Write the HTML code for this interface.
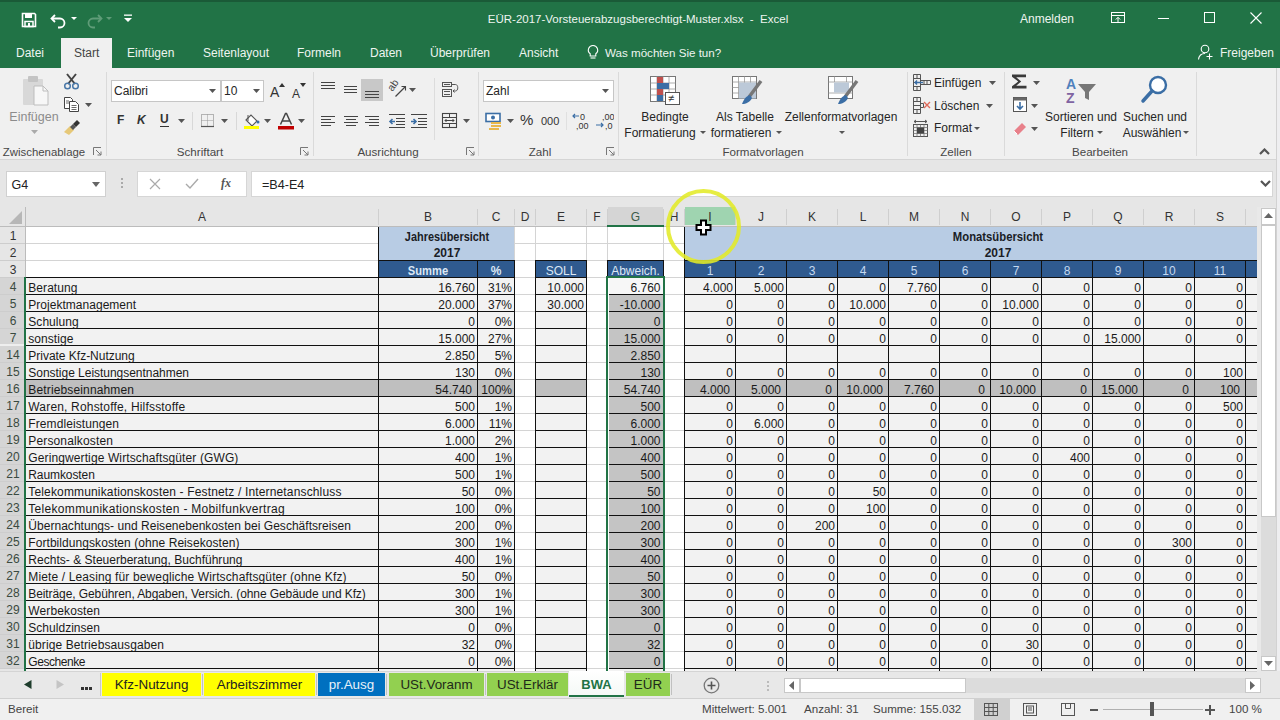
<!DOCTYPE html>
<html><head><meta charset="utf-8"><style>
html,body{margin:0;padding:0;width:1280px;height:720px;overflow:hidden;background:#f0f0f0;}
body{position:relative;font-family:"Liberation Sans", sans-serif;}
.a{position:absolute;}
.t{position:absolute;white-space:pre;line-height:16px;font-family:"Liberation Sans", sans-serif;}
</style></head><body>
<div class="a" style="left:0px;top:0px;width:1280px;height:68px;background:#217346;"></div>
<div class="a" style="left:0px;top:0px;width:1280px;height:2px;background:#1a5a37;"></div>
<div class="t" style="left:338px;width:600px;text-align:center;top:11px;font-size:11.5px;color:#eef5f0;font-weight:normal;">EÜR-2017-Vorsteuerabzugsberechtigt-Muster.xlsx  -  Excel</div>
<div class="t" style="left:1020px;top:11px;font-size:12px;color:#eef5f0;font-weight:normal;">Anmelden</div>
<svg class="a" style="left:20px;top:11px;" width="18" height="18" viewBox="0 0 18 18"><path d="M2.5 2.5h12l1 1v12h-13z" fill="none" stroke="#fff" stroke-width="1.6"/><rect x="5" y="2.5" width="7" height="4.5" fill="#fff"/><rect x="5" y="10.5" width="8" height="5" fill="none" stroke="#fff" stroke-width="1.5"/><rect x="8" y="12" width="2" height="3" fill="#fff"/></svg>
<svg class="a" style="left:49px;top:11px;" width="20" height="18" viewBox="0 0 20 18"><path d="M6 4 L2.5 7.5 L6 11" fill="none" stroke="#fff" stroke-width="1.8"/><path d="M3 7.5 H11 a4.5 4.5 0 0 1 0 9 H9" fill="none" stroke="#fff" stroke-width="1.8"/></svg>
<svg class="a" style="left:70px;top:16px;" width="8" height="5" viewBox="0 0 8 5"><path d="M1 1h6l-3 3z" fill="#fff"/></svg>
<svg class="a" style="left:84px;top:11px;" width="20" height="18" viewBox="0 0 20 18"><path d="M14 4 L17.5 7.5 L14 11" fill="none" stroke="#5f9c78" stroke-width="1.8"/><path d="M17 7.5 H9 a4.5 4.5 0 0 0 0 9 H11" fill="none" stroke="#5f9c78" stroke-width="1.8"/></svg>
<svg class="a" style="left:105px;top:16px;" width="8" height="5" viewBox="0 0 8 5"><path d="M1 1h6l-3 3z" fill="#5f9c78"/></svg>
<svg class="a" style="left:122px;top:13px;" width="12" height="10" viewBox="0 0 12 10"><rect x="2" y="1.5" width="8" height="1.3" fill="#fff"/><path d="M2 5h8l-4 4z" fill="#fff"/></svg>
<svg class="a" style="left:1109px;top:11px;" width="18" height="14" viewBox="0 0 18 14"><rect x="2.5" y="1.5" width="13" height="10" fill="none" stroke="#fff" stroke-width="1"/><line x1="2.5" y1="4.5" x2="15.5" y2="4.5" stroke="#fff"/><path d="M9 11V6.5M6.8 8.5L9 6.3l2.2 2.2" fill="none" stroke="#fff" stroke-width="1"/></svg>
<div class="a" style="left:1158px;top:18px;width:11px;height:1px;background:#fff;"></div>
<div class="a" style="left:1204px;top:12px;width:11px;height:11px;border:1px solid #fff;box-sizing:border-box;"></div>
<svg class="a" style="left:1249px;top:11px;" width="14" height="14" viewBox="0 0 14 14"><path d="M1.5 1.5L12.5 12.5M12.5 1.5L1.5 12.5" stroke="#fff" stroke-width="1.1"/></svg>
<div class="a" style="left:61px;top:38px;width:51px;height:30px;background:#f0f0f0;"></div>
<div class="t" style="left:16px;top:45px;font-size:12px;color:#eef5f0;font-weight:normal;">Datei</div>
<div class="t" style="left:74px;top:45px;font-size:12px;color:#444;font-weight:normal;">Start</div>
<div class="t" style="left:127px;top:45px;font-size:12px;color:#eef5f0;font-weight:normal;">Einfügen</div>
<div class="t" style="left:203px;top:45px;font-size:12px;color:#eef5f0;font-weight:normal;">Seitenlayout</div>
<div class="t" style="left:297px;top:45px;font-size:12px;color:#eef5f0;font-weight:normal;">Formeln</div>
<div class="t" style="left:370px;top:45px;font-size:12px;color:#eef5f0;font-weight:normal;">Daten</div>
<div class="t" style="left:430px;top:45px;font-size:12px;color:#eef5f0;font-weight:normal;">Überprüfen</div>
<div class="t" style="left:519px;top:45px;font-size:12px;color:#eef5f0;font-weight:normal;">Ansicht</div>
<div class="t" style="left:605px;top:45px;font-size:11.6px;color:#eef5f0;font-weight:normal;">Was möchten Sie tun?</div>
<svg class="a" style="left:586px;top:44px;" width="14" height="17" viewBox="0 0 14 17"><path d="M7 1.5a4.6 4.6 0 0 0-2.8 8.3V12h5.6V9.8A4.6 4.6 0 0 0 7 1.5z" fill="none" stroke="#fff" stroke-width="1.1"/><line x1="4.5" y1="14" x2="9.5" y2="14" stroke="#fff" stroke-width="1.1"/></svg>
<div class="t" style="left:1220px;top:45px;font-size:12px;color:#eef5f0;font-weight:normal;">Freigeben</div>
<svg class="a" style="left:1197px;top:44px;" width="18" height="16" viewBox="0 0 18 16"><circle cx="8" cy="5" r="3.8" fill="none" stroke="#fff" stroke-width="1.1"/><path d="M1.5 15.5c0.5-4 3-6 6.5-6" fill="none" stroke="#fff" stroke-width="1.1"/><path d="M12.5 9.5v6M9.5 12.5h6" stroke="#fff" stroke-width="1.1"/></svg>
<div class="a" style="left:0px;top:68px;width:1280px;height:91px;background:#f0f0f0;"></div>
<div class="a" style="left:0px;top:159px;width:1280px;height:1px;background:#d5d5d5;"></div>
<div class="a" style="left:106px;top:72px;width:1px;height:84px;background:#dadada;"></div>
<div class="a" style="left:313px;top:72px;width:1px;height:84px;background:#dadada;"></div>
<div class="a" style="left:478px;top:72px;width:1px;height:84px;background:#dadada;"></div>
<div class="a" style="left:618px;top:72px;width:1px;height:84px;background:#dadada;"></div>
<div class="a" style="left:907px;top:72px;width:1px;height:84px;background:#dadada;"></div>
<div class="a" style="left:1004px;top:72px;width:1px;height:84px;background:#dadada;"></div>
<div class="a" style="left:1196px;top:72px;width:1px;height:84px;background:#dadada;"></div>
<div class="t" style="left:-256px;width:600px;text-align:center;top:144px;font-size:11.4px;color:#474747;font-weight:normal;">Zwischenablage</div>
<div class="t" style="left:-100px;width:600px;text-align:center;top:144px;font-size:11.6px;color:#474747;font-weight:normal;">Schriftart</div>
<div class="t" style="left:88px;width:600px;text-align:center;top:144px;font-size:11.6px;color:#474747;font-weight:normal;">Ausrichtung</div>
<div class="t" style="left:240px;width:600px;text-align:center;top:144px;font-size:11.6px;color:#474747;font-weight:normal;">Zahl</div>
<div class="t" style="left:463px;width:600px;text-align:center;top:144px;font-size:11.6px;color:#474747;font-weight:normal;">Formatvorlagen</div>
<div class="t" style="left:656px;width:600px;text-align:center;top:144px;font-size:11.6px;color:#474747;font-weight:normal;">Zellen</div>
<div class="t" style="left:800px;width:600px;text-align:center;top:144px;font-size:11.6px;color:#474747;font-weight:normal;">Bearbeiten</div>
<svg class="a" style="left:93px;top:147px;" width="9" height="9" viewBox="0 0 9 9"><path d="M0.5 8V0.5H8" fill="none" stroke="#777" stroke-width="1"/><path d="M3 3L8 8M8 4.5V8H4.5" fill="none" stroke="#777" stroke-width="1"/></svg>
<svg class="a" style="left:300px;top:147px;" width="9" height="9" viewBox="0 0 9 9"><path d="M0.5 8V0.5H8" fill="none" stroke="#777" stroke-width="1"/><path d="M3 3L8 8M8 4.5V8H4.5" fill="none" stroke="#777" stroke-width="1"/></svg>
<svg class="a" style="left:466px;top:147px;" width="9" height="9" viewBox="0 0 9 9"><path d="M0.5 8V0.5H8" fill="none" stroke="#777" stroke-width="1"/><path d="M3 3L8 8M8 4.5V8H4.5" fill="none" stroke="#777" stroke-width="1"/></svg>
<svg class="a" style="left:606px;top:147px;" width="9" height="9" viewBox="0 0 9 9"><path d="M0.5 8V0.5H8" fill="none" stroke="#777" stroke-width="1"/><path d="M3 3L8 8M8 4.5V8H4.5" fill="none" stroke="#777" stroke-width="1"/></svg>
<svg class="a" style="left:1259px;top:148px;" width="11" height="7" viewBox="0 0 11 7"><path d="M1 6L5.5 1.5L10 6" fill="none" stroke="#555" stroke-width="2.2"/></svg>
<svg class="a" style="left:20px;top:74px;" width="34" height="34" viewBox="0 0 34 34"><rect x="3" y="5" width="20" height="26" rx="1" fill="#d8d8d8"/><rect x="8" y="2" width="10" height="6" rx="1" fill="#c4c4c4"/><path d="M14 12h9l5 5v14H14z" fill="#f7f7f7" stroke="#bdbdbd" stroke-width="1"/><path d="M23 12v5h5" fill="none" stroke="#bdbdbd"/></svg>
<div class="t" style="left:-266px;width:600px;text-align:center;top:109px;font-size:12.5px;color:#8c8c8c;font-weight:normal;">Einfügen</div>
<svg class="a" style="left:31px;top:130px;" width="7" height="4" viewBox="0 0 7 4"><path d="M0 0h7l-3.5 4z" fill="#aaa"/></svg>
<svg class="a" style="left:63px;top:73px;" width="17" height="17" viewBox="0 0 17 17"><path d="M4 1l8 10M13 1l-8 10" stroke="#444" stroke-width="2"/><circle cx="4.5" cy="13" r="2.8" fill="none" stroke="#4a78a8" stroke-width="1.5"/><circle cx="12.5" cy="13" r="2.8" fill="none" stroke="#4a78a8" stroke-width="1.5"/></svg>
<svg class="a" style="left:63px;top:96px;" width="18" height="17" viewBox="0 0 18 17"><path d="M1.5 1.5h6l2 2v9h-8z" fill="#fff" stroke="#444" stroke-width="1"/><path d="M6.5 5.5h6l3 3v7h-9z" fill="#fff" stroke="#444" stroke-width="1"/><path d="M8.5 9.5h5M8.5 11.5h5M8.5 13.5h5M3 5h3M3 7h3" stroke="#444" stroke-width="0.8"/></svg>
<svg class="a" style="left:85px;top:103px;" width="7" height="4" viewBox="0 0 7 4"><path d="M0 0h7l-3.5 4z" fill="#555"/></svg>
<svg class="a" style="left:63px;top:119px;" width="18" height="17" viewBox="0 0 18 17"><path d="M1 13l6-6 4 4-5 5z" fill="#e6c878"/><path d="M7 8l3-3 3 3-3 3z" fill="#555"/><path d="M10 5l4-4 3 3-4 4z" fill="#333"/></svg>
<div class="a" style="left:111px;top:80px;width:110px;height:22px;background:#fff;border:1px solid #c6c6c6;box-sizing:border-box;"></div>
<div class="t" style="left:114px;top:83px;font-size:12px;color:#262626;font-weight:normal;">Calibri</div>
<svg class="a" style="left:209px;top:89px;" width="7" height="4" viewBox="0 0 7 4"><path d="M0 0h7l-3.5 4z" fill="#555"/></svg>
<div class="a" style="left:221px;top:80px;width:43px;height:22px;background:#fff;border:1px solid #c6c6c6;box-sizing:border-box;"></div>
<div class="t" style="left:224px;top:83px;font-size:12px;color:#262626;font-weight:normal;">10</div>
<svg class="a" style="left:253px;top:89px;" width="7" height="4" viewBox="0 0 7 4"><path d="M0 0h7l-3.5 4z" fill="#555"/></svg>
<div class="t" style="left:270px;top:83px;font-size:14px;color:#333;font-weight:normal;line-height:18px;">A</div>
<svg class="a" style="left:279px;top:83px;" width="6" height="4" viewBox="0 0 6 4"><path d="M0 4L3 0L6 4z" fill="#333"/></svg>
<div class="t" style="left:292px;top:85px;font-size:12px;color:#333;font-weight:normal;line-height:18px;">A</div>
<svg class="a" style="left:300px;top:83px;" width="6" height="4" viewBox="0 0 6 4"><path d="M0 0L3 4L6 0z" fill="#333"/></svg>
<div class="t" style="left:117px;top:112px;font-size:12px;color:#333;font-weight:bold;">F</div>
<div class="t" style="left:137px;top:112px;font-size:12px;color:#333;font-weight:bold;font-style:italic;">K</div>
<div class="t" style="left:160px;top:111px;font-size:12px;color:#333;font-weight:bold;">U</div>
<div class="a" style="left:160px;top:126px;width:9px;height:1px;background:#333;"></div>
<svg class="a" style="left:178px;top:119px;" width="7" height="4" viewBox="0 0 7 4"><path d="M0 0h7l-3.5 4z" fill="#555"/></svg>
<div class="a" style="left:192px;top:112px;width:1px;height:18px;background:#d8d8d8;"></div>
<svg class="a" style="left:200px;top:113px;" width="15" height="15" viewBox="0 0 15 15"><rect x="1.5" y="1.5" width="12" height="12" fill="none" stroke="#777" stroke-width="1" stroke-dasharray="1 1"/><line x1="7.5" y1="1.5" x2="7.5" y2="13.5" stroke="#999" stroke-dasharray="1 1"/><line x1="1.5" y1="7.5" x2="13.5" y2="7.5" stroke="#999" stroke-dasharray="1 1"/><line x1="1" y1="13.5" x2="14" y2="13.5" stroke="#555" stroke-width="1.2"/></svg>
<svg class="a" style="left:221px;top:119px;" width="7" height="4" viewBox="0 0 7 4"><path d="M0 0h7l-3.5 4z" fill="#555"/></svg>
<div class="a" style="left:236px;top:112px;width:1px;height:18px;background:#d8d8d8;"></div>
<svg class="a" style="left:243px;top:112px;" width="18" height="18" viewBox="0 0 18 18"><path d="M3 8l5-5 6 6-5 5z" fill="#fff" stroke="#555" stroke-width="1.1"/><path d="M5 3v6" stroke="#555"/><circle cx="15" cy="10" r="1.5" fill="#3b6ea5"/><rect x="1" y="14" width="15" height="3" fill="#ffff00"/></svg>
<svg class="a" style="left:264px;top:119px;" width="7" height="4" viewBox="0 0 7 4"><path d="M0 0h7l-3.5 4z" fill="#555"/></svg>
<svg class="a" style="left:277px;top:112px;" width="18" height="18" viewBox="0 0 18 18"><path d="M3.5 12.5L8.5 1.5h1L14.5 12.5M5.5 9h7" fill="none" stroke="#444" stroke-width="1.5"/><rect x="1" y="14" width="16" height="3.5" fill="#c00000"/></svg>
<svg class="a" style="left:298px;top:119px;" width="7" height="4" viewBox="0 0 7 4"><path d="M0 0h7l-3.5 4z" fill="#555"/></svg>
<div class="a" style="left:321px;top:82px;width:14px;height:1px;background:#444;"></div>
<div class="a" style="left:321px;top:85px;width:14px;height:1px;background:#444;"></div>
<div class="a" style="left:321px;top:88px;width:14px;height:1px;background:#444;"></div>
<div class="a" style="left:344px;top:86px;width:13px;height:1px;background:#444;"></div>
<div class="a" style="left:344px;top:89px;width:13px;height:1px;background:#444;"></div>
<div class="a" style="left:344px;top:92px;width:13px;height:1px;background:#444;"></div>
<div class="a" style="left:361px;top:79px;width:22px;height:22px;background:#c8c8c8;"></div>
<div class="a" style="left:365px;top:91px;width:14px;height:1px;background:#444;"></div>
<div class="a" style="left:365px;top:94px;width:14px;height:1px;background:#444;"></div>
<div class="a" style="left:365px;top:97px;width:14px;height:1px;background:#444;"></div>
<svg class="a" style="left:386px;top:77px;" width="22" height="22" viewBox="0 0 22 22"><text x="0" y="0" font-family="Liberation Sans" font-size="10.5" fill="#444" transform="translate(6.5 15) rotate(-55)">ab</text><path d="M9.5 19.5L19 10" stroke="#444" stroke-width="1.2"/><path d="M15.5 9.5h4v4" fill="none" stroke="#444" stroke-width="1.1"/></svg>
<svg class="a" style="left:409px;top:88px;" width="7" height="4" viewBox="0 0 7 4"><path d="M0 0h7l-3.5 4z" fill="#555"/></svg>
<div class="a" style="left:434px;top:78px;width:1px;height:62px;background:#dcdcdc;"></div>
<svg class="a" style="left:441px;top:81px;" width="20" height="18" viewBox="0 0 20 18"><rect x="1.5" y="1.5" width="9" height="4" fill="none" stroke="#555" stroke-width="1"/><path d="M3 3.5h6M10.5 3.5h4" stroke="#555" stroke-width="1"/><rect x="1.5" y="8.5" width="9" height="7" fill="none" stroke="#555" stroke-width="1"/><path d="M3 10.5h6M3 13.5h6" stroke="#555" stroke-width="1"/><path d="M14.5 3.5c3 0 3 6.5 0 6.5H12M13.5 8.5L12 10l1.5 1.5" fill="none" stroke="#555" stroke-width="1"/></svg>
<div class="a" style="left:321px;top:116px;width:14px;height:1px;background:#444;"></div>
<div class="a" style="left:321px;top:119px;width:10px;height:1px;background:#444;"></div>
<div class="a" style="left:321px;top:122px;width:14px;height:1px;background:#444;"></div>
<div class="a" style="left:321px;top:125px;width:10px;height:1px;background:#444;"></div>
<div class="a" style="left:344px;top:116px;width:14px;height:1px;background:#444;"></div>
<div class="a" style="left:346px;top:119px;width:10px;height:1px;background:#444;"></div>
<div class="a" style="left:344px;top:122px;width:14px;height:1px;background:#444;"></div>
<div class="a" style="left:346px;top:125px;width:10px;height:1px;background:#444;"></div>
<div class="a" style="left:365px;top:116px;width:14px;height:1px;background:#444;"></div>
<div class="a" style="left:369px;top:119px;width:10px;height:1px;background:#444;"></div>
<div class="a" style="left:365px;top:122px;width:14px;height:1px;background:#444;"></div>
<div class="a" style="left:369px;top:125px;width:10px;height:1px;background:#444;"></div>
<svg class="a" style="left:388px;top:113px;" width="18" height="16" viewBox="0 0 18 16"><path d="M1 1.5h16M8 5.5h9M8 8.5h9M8 11.5h9M1 14.5h16" stroke="#444" stroke-width="1"/><path d="M2 8.5h5M4.5 6L2 8.5 4.5 11" fill="none" stroke="#3b6ea5" stroke-width="1.6"/></svg>
<svg class="a" style="left:410px;top:113px;" width="18" height="16" viewBox="0 0 18 16"><path d="M1 1.5h16M8 5.5h9M8 8.5h9M8 11.5h9M1 14.5h16" stroke="#444" stroke-width="1"/><path d="M1 8.5h5M3.5 6L6 8.5 3.5 11" fill="none" stroke="#3b6ea5" stroke-width="1.6"/></svg>
<svg class="a" style="left:441px;top:112px;" width="17" height="17" viewBox="0 0 17 17"><rect x="1.5" y="1.5" width="14" height="14" fill="none" stroke="#444" stroke-width="1.1"/><path d="M1.5 5.5h14M1.5 11.5h14M8.5 1.5v4M8.5 11.5v4" stroke="#444" stroke-width="1"/><path d="M4 8.5h9M5.5 7l-1.5 1.5 1.5 1.5M11.5 7l1.5 1.5-1.5 1.5" fill="none" stroke="#444" stroke-width="1"/></svg>
<svg class="a" style="left:463px;top:119px;" width="7" height="4" viewBox="0 0 7 4"><path d="M0 0h7l-3.5 4z" fill="#555"/></svg>
<div class="a" style="left:483px;top:80px;width:131px;height:22px;background:#fff;border:1px solid #c6c6c6;box-sizing:border-box;"></div>
<div class="t" style="left:486px;top:83px;font-size:12px;color:#262626;font-weight:normal;">Zahl</div>
<svg class="a" style="left:602px;top:89px;" width="7" height="4" viewBox="0 0 7 4"><path d="M0 0h7l-3.5 4z" fill="#555"/></svg>
<svg class="a" style="left:485px;top:112px;" width="20" height="18" viewBox="0 0 20 18"><rect x="1" y="1.5" width="14" height="8" fill="#fff" stroke="#3b6ea5" stroke-width="1.6"/><circle cx="8" cy="5.5" r="2" fill="#3b6ea5"/><rect x="6" y="10" width="10" height="2" fill="#e8b84a"/><rect x="6" y="13" width="10" height="2" fill="#e8b84a"/><rect x="4" y="16" width="10" height="2" fill="#e8b84a"/></svg>
<svg class="a" style="left:507px;top:119px;" width="7" height="4" viewBox="0 0 7 4"><path d="M0 0h7l-3.5 4z" fill="#555"/></svg>
<div class="t" style="left:520px;top:111px;font-size:15px;color:#333;font-weight:normal;line-height:18px;">%</div>
<div class="t" style="left:541px;top:113px;font-size:11px;color:#333;font-weight:normal;">000</div>
<div class="a" style="left:566px;top:112px;width:1px;height:18px;background:#e0e0e0;"></div>
<svg class="a" style="left:571px;top:111px;" width="20" height="20" viewBox="0 0 20 20"><text x="9" y="9" font-family="Liberation Sans" font-size="9" fill="#333">0</text><text x="5" y="18" font-family="Liberation Sans" font-size="9" fill="#333">,00</text><path d="M2 5h6M4 3L2 5l2 2" fill="none" stroke="#3b6ea5" stroke-width="1.2"/></svg>
<svg class="a" style="left:594px;top:111px;" width="20" height="20" viewBox="0 0 20 20"><text x="8" y="9" font-family="Liberation Sans" font-size="9" fill="#333">,00</text><text x="11" y="18" font-family="Liberation Sans" font-size="9" fill="#333">,0</text><path d="M2 14h7M7 12l2 2-2 2" fill="none" stroke="#3b6ea5" stroke-width="1.2"/></svg>
<svg class="a" style="left:649px;top:75px;" width="34" height="32" viewBox="0 0 34 32"><rect x="1.5" y="1.5" width="25" height="25" fill="#fff" stroke="#777" stroke-width="1"/><path d="M1.5 8h25M1.5 14h25M1.5 20h25M8 1.5v25M14 1.5v25M20 1.5v25" stroke="#999" stroke-width="0.8"/><rect x="8" y="2" width="6" height="6" fill="#c0504d"/><rect x="8" y="8" width="12" height="6" fill="#3b6ea5"/><rect x="8" y="14" width="6" height="6" fill="#c0504d"/><rect x="8" y="20" width="6" height="6" fill="#3b6ea5"/><rect x="16.5" y="17.5" width="14" height="12" fill="#fff" stroke="#555" stroke-width="1"/><text x="19" y="27" font-family="Liberation Sans" font-size="11" fill="#333">≠</text></svg>
<div class="t" style="left:365px;width:600px;text-align:center;top:109px;font-size:12px;color:#262626;font-weight:normal;">Bedingte</div>
<div class="t" style="left:360px;width:600px;text-align:center;top:125px;font-size:12px;color:#262626;font-weight:normal;">Formatierung</div>
<svg class="a" style="left:700px;top:131px;" width="6" height="3" viewBox="0 0 6 3"><path d="M0 0h6l-3 3z" fill="#555"/></svg>
<svg class="a" style="left:731px;top:75px;" width="34" height="32" viewBox="0 0 34 32"><rect x="1.5" y="1.5" width="24" height="22" fill="#fff" stroke="#777" stroke-width="1"/><path d="M1.5 7h24M1.5 12.5h24M1.5 18h24M7.5 1.5v22M13.5 1.5v22M19.5 1.5v22" stroke="#999" stroke-width="0.8"/><rect x="8" y="7.5" width="17" height="16" fill="#bcc9d8"/><path d="M30 6L18 22" stroke="#777" stroke-width="3.5"/><path d="M19 20c-4 1-6 4-8 9 4 0 8-2 10-6z" fill="#3b6ea5"/></svg>
<div class="t" style="left:445px;width:600px;text-align:center;top:109px;font-size:12px;color:#262626;font-weight:normal;">Als Tabelle</div>
<div class="t" style="left:441px;width:600px;text-align:center;top:125px;font-size:12px;color:#262626;font-weight:normal;">formatieren</div>
<svg class="a" style="left:776px;top:131px;" width="6" height="3" viewBox="0 0 6 3"><path d="M0 0h6l-3 3z" fill="#555"/></svg>
<svg class="a" style="left:827px;top:75px;" width="34" height="32" viewBox="0 0 34 32"><rect x="1.5" y="1.5" width="24" height="22" fill="#fff" stroke="#777" stroke-width="1"/><path d="M1.5 7h24M1.5 18h24M7.5 1.5v5.5M19.5 1.5v5.5" stroke="#999" stroke-width="0.8"/><rect x="7" y="7.5" width="15" height="10" fill="#bcc9d8"/><path d="M30 6L18 22" stroke="#777" stroke-width="3.5"/><path d="M19 20c-4 1-6 4-8 9 4 0 8-2 10-6z" fill="#3b6ea5"/></svg>
<div class="t" style="left:541px;width:600px;text-align:center;top:109px;font-size:12px;color:#262626;font-weight:normal;">Zellenformatvorlagen</div>
<svg class="a" style="left:839px;top:131px;" width="6" height="3" viewBox="0 0 6 3"><path d="M0 0h6l-3 3z" fill="#555"/></svg>
<svg class="a" style="left:912px;top:73px;" width="20" height="18" viewBox="0 0 20 18"><path d="M1.5 1.5h7v16h-7zM1.5 5.5h7M1.5 9.5h7M1.5 13.5h7M5 1.5v4M5 13.5v4" fill="none" stroke="#555" stroke-width="1"/><path d="M8.5 7.5h10v4h-10zM12 7.5v4M15 7.5v4" fill="none" stroke="#555" stroke-width="1"/><path d="M11 9.5H3M5 7.5L3 9.5l2 2" fill="none" stroke="#3b6ea5" stroke-width="1.4"/></svg>
<div class="t" style="left:934px;top:75px;font-size:12px;color:#262626;font-weight:normal;">Einfügen</div>
<svg class="a" style="left:989px;top:81px;" width="7" height="4" viewBox="0 0 7 4"><path d="M0 0h7l-3.5 4z" fill="#555"/></svg>
<svg class="a" style="left:912px;top:96px;" width="20" height="18" viewBox="0 0 20 18"><path d="M1.5 1.5h7v16h-7zM1.5 5.5h7M1.5 9.5h7M1.5 13.5h7M5 1.5v4M5 13.5v4M8.5 7.5h3v4h-3" fill="none" stroke="#555" stroke-width="1"/><path d="M12 6l6 6M18 6l-6 6" stroke="#e06a5a" stroke-width="1.4"/></svg>
<div class="t" style="left:934px;top:98px;font-size:12px;color:#262626;font-weight:normal;">Löschen</div>
<svg class="a" style="left:986px;top:104px;" width="7" height="4" viewBox="0 0 7 4"><path d="M0 0h7l-3.5 4z" fill="#555"/></svg>
<svg class="a" style="left:912px;top:119px;" width="18" height="19" viewBox="0 0 18 19"><path d="M2 2.5h13M4 1l-2 1.5 2 1.5M13 1l2 1.5-2 1.5" fill="none" stroke="#555" stroke-width="1"/><rect x="1.5" y="5.5" width="14" height="12" fill="none" stroke="#555" stroke-width="1"/><path d="M1.5 8.5h14M1.5 11.5h14M1.5 14.5h14M5 5.5v12M8.5 5.5v12M12 5.5v12" stroke="#777" stroke-width="0.8"/><rect x="5" y="8.5" width="7" height="6" fill="#444"/></svg>
<div class="t" style="left:934px;top:120px;font-size:12px;color:#262626;font-weight:normal;">Format</div>
<svg class="a" style="left:974px;top:127px;" width="6" height="3" viewBox="0 0 6 3"><path d="M0 0h6l-3 3z" fill="#555"/></svg>
<svg class="a" style="left:1011px;top:73px;" width="17" height="17" viewBox="0 0 17 17"><path d="M1 1.5h14v2.8H5.2l5 4.2-5 4.2H15.5v2.8H1v-2.2l6.2-4.8L1 3.7z" fill="#3a3a3a"/></svg>
<svg class="a" style="left:1033px;top:81px;" width="7" height="4" viewBox="0 0 7 4"><path d="M0 0h7l-3.5 4z" fill="#555"/></svg>
<svg class="a" style="left:1012px;top:96px;" width="16" height="17" viewBox="0 0 16 17"><rect x="1.5" y="1.5" width="13" height="14" fill="#fff" stroke="#555" stroke-width="1"/><rect x="1.5" y="1.5" width="13" height="3" fill="#666"/><path d="M8 6v7M5 10l3 3 3-3" fill="none" stroke="#3b6ea5" stroke-width="1.6"/></svg>
<svg class="a" style="left:1031px;top:104px;" width="7" height="4" viewBox="0 0 7 4"><path d="M0 0h7l-3.5 4z" fill="#555"/></svg>
<svg class="a" style="left:1012px;top:120px;" width="16" height="16" viewBox="0 0 16 16"><path d="M2 11l8-8 4 4-8 8z" fill="#e8808a"/><path d="M2 11l3 3" stroke="#fff" stroke-width="1"/></svg>
<svg class="a" style="left:1031px;top:127px;" width="7" height="4" viewBox="0 0 7 4"><path d="M0 0h7l-3.5 4z" fill="#555"/></svg>
<svg class="a" style="left:1064px;top:75px;" width="34" height="30" viewBox="0 0 34 30"><text x="2" y="14" font-family="Liberation Sans" font-size="14" font-weight="bold" fill="#4f81bd">A</text><text x="2" y="28" font-family="Liberation Sans" font-size="14" font-weight="bold" fill="#8064a2">Z</text><path d="M14 9h18l-7 8v8l-4-2v-6z" fill="#777"/></svg>
<div class="t" style="left:781px;width:600px;text-align:center;top:109px;font-size:12px;color:#262626;font-weight:normal;">Sortieren und</div>
<div class="t" style="left:777px;width:600px;text-align:center;top:125px;font-size:12px;color:#262626;font-weight:normal;">Filtern</div>
<svg class="a" style="left:1097px;top:131px;" width="6" height="3" viewBox="0 0 6 3"><path d="M0 0h6l-3 3z" fill="#555"/></svg>
<svg class="a" style="left:1138px;top:74px;" width="32" height="32" viewBox="0 0 32 32"><circle cx="20" cy="11" r="8" fill="#fff" stroke="#3b6ea5" stroke-width="2.4"/><path d="M14 17L5 27" stroke="#3b6ea5" stroke-width="3.5" stroke-linecap="round"/></svg>
<div class="t" style="left:855px;width:600px;text-align:center;top:109px;font-size:12px;color:#262626;font-weight:normal;">Suchen und</div>
<div class="t" style="left:852px;width:600px;text-align:center;top:125px;font-size:12px;color:#262626;font-weight:normal;">Auswählen</div>
<svg class="a" style="left:1183px;top:131px;" width="6" height="3" viewBox="0 0 6 3"><path d="M0 0h6l-3 3z" fill="#555"/></svg>
<div class="a" style="left:0px;top:160px;width:1280px;height:47px;background:#e6e6e6;"></div>
<div class="a" style="left:6px;top:171px;width:100px;height:26px;background:#fff;border:1px solid #d0d0d0;box-sizing:border-box;"></div>
<div class="t" style="left:11.5px;top:177px;font-size:12.5px;color:#222;font-weight:normal;">G4</div>
<svg class="a" style="left:92px;top:182px;" width="8" height="5" viewBox="0 0 8 5"><path d="M0 0h8l-4 5z" fill="#666"/></svg>
<div class="a" style="left:121px;top:178px;width:2px;height:2px;background:#aaa;"></div>
<div class="a" style="left:121px;top:182px;width:2px;height:2px;background:#aaa;"></div>
<div class="a" style="left:121px;top:186px;width:2px;height:2px;background:#aaa;"></div>
<div class="a" style="left:137px;top:171px;width:110px;height:26px;background:#fff;border:1px solid #d6d6d6;box-sizing:border-box;"></div>
<svg class="a" style="left:149px;top:178px;" width="12" height="12" viewBox="0 0 12 12"><path d="M1 1L11 11M11 1L1 11" stroke="#aaa" stroke-width="1.2"/></svg>
<svg class="a" style="left:185px;top:178px;" width="14" height="12" viewBox="0 0 14 12"><path d="M1 6L5 10L13 1" fill="none" stroke="#aaa" stroke-width="1.4"/></svg>
<div class="t" style="left:221px;top:175px;font-size:12px;color:#555;font-weight:bold;font-family:'Liberation Serif',serif;font-style:italic;">fx</div>
<div class="a" style="left:251px;top:171px;width:1022px;height:26px;background:#fff;border:1px solid #d6d6d6;box-sizing:border-box;"></div>
<div class="t" style="left:262px;top:177px;font-size:12.6px;color:#222;font-weight:normal;">=B4-E4</div>
<svg class="a" style="left:1260px;top:180px;" width="11" height="7" viewBox="0 0 11 7"><path d="M1 1L5.5 5.5L10 1" fill="none" stroke="#555" stroke-width="2.2"/></svg>
<div class="a" style="left:26px;top:227px;width:1231px;height:444px;background:#fff;"></div>
<div class="a" style="left:378px;top:226px;width:1px;height:445px;background:#d4d4d4;"></div>
<div class="a" style="left:477px;top:226px;width:1px;height:445px;background:#d4d4d4;"></div>
<div class="a" style="left:514px;top:226px;width:1px;height:445px;background:#d4d4d4;"></div>
<div class="a" style="left:535px;top:226px;width:1px;height:445px;background:#d4d4d4;"></div>
<div class="a" style="left:586px;top:226px;width:1px;height:445px;background:#d4d4d4;"></div>
<div class="a" style="left:607px;top:226px;width:1px;height:445px;background:#d4d4d4;"></div>
<div class="a" style="left:663px;top:226px;width:1px;height:445px;background:#d4d4d4;"></div>
<div class="a" style="left:684px;top:226px;width:1px;height:445px;background:#d4d4d4;"></div>
<div class="a" style="left:735px;top:226px;width:1px;height:445px;background:#d4d4d4;"></div>
<div class="a" style="left:786px;top:226px;width:1px;height:445px;background:#d4d4d4;"></div>
<div class="a" style="left:837px;top:226px;width:1px;height:445px;background:#d4d4d4;"></div>
<div class="a" style="left:888px;top:226px;width:1px;height:445px;background:#d4d4d4;"></div>
<div class="a" style="left:939px;top:226px;width:1px;height:445px;background:#d4d4d4;"></div>
<div class="a" style="left:990px;top:226px;width:1px;height:445px;background:#d4d4d4;"></div>
<div class="a" style="left:1041px;top:226px;width:1px;height:445px;background:#d4d4d4;"></div>
<div class="a" style="left:1092px;top:226px;width:1px;height:445px;background:#d4d4d4;"></div>
<div class="a" style="left:1143px;top:226px;width:1px;height:445px;background:#d4d4d4;"></div>
<div class="a" style="left:1194px;top:226px;width:1px;height:445px;background:#d4d4d4;"></div>
<div class="a" style="left:1245px;top:226px;width:1px;height:445px;background:#d4d4d4;"></div>
<div class="a" style="left:26px;top:243px;width:1231px;height:1px;background:#d4d4d4;"></div>
<div class="a" style="left:26px;top:260px;width:1231px;height:1px;background:#d4d4d4;"></div>
<div class="a" style="left:26px;top:277px;width:1231px;height:1px;background:#d4d4d4;"></div>
<div class="a" style="left:26px;top:294px;width:1231px;height:1px;background:#d4d4d4;"></div>
<div class="a" style="left:26px;top:311px;width:1231px;height:1px;background:#d4d4d4;"></div>
<div class="a" style="left:26px;top:328px;width:1231px;height:1px;background:#d4d4d4;"></div>
<div class="a" style="left:26px;top:345px;width:1231px;height:1px;background:#d4d4d4;"></div>
<div class="a" style="left:26px;top:362px;width:1231px;height:1px;background:#d4d4d4;"></div>
<div class="a" style="left:26px;top:379px;width:1231px;height:1px;background:#d4d4d4;"></div>
<div class="a" style="left:26px;top:396px;width:1231px;height:1px;background:#d4d4d4;"></div>
<div class="a" style="left:26px;top:413px;width:1231px;height:1px;background:#d4d4d4;"></div>
<div class="a" style="left:26px;top:430px;width:1231px;height:1px;background:#d4d4d4;"></div>
<div class="a" style="left:26px;top:447px;width:1231px;height:1px;background:#d4d4d4;"></div>
<div class="a" style="left:26px;top:464px;width:1231px;height:1px;background:#d4d4d4;"></div>
<div class="a" style="left:26px;top:481px;width:1231px;height:1px;background:#d4d4d4;"></div>
<div class="a" style="left:26px;top:498px;width:1231px;height:1px;background:#d4d4d4;"></div>
<div class="a" style="left:26px;top:515px;width:1231px;height:1px;background:#d4d4d4;"></div>
<div class="a" style="left:26px;top:532px;width:1231px;height:1px;background:#d4d4d4;"></div>
<div class="a" style="left:26px;top:549px;width:1231px;height:1px;background:#d4d4d4;"></div>
<div class="a" style="left:26px;top:566px;width:1231px;height:1px;background:#d4d4d4;"></div>
<div class="a" style="left:26px;top:583px;width:1231px;height:1px;background:#d4d4d4;"></div>
<div class="a" style="left:26px;top:600px;width:1231px;height:1px;background:#d4d4d4;"></div>
<div class="a" style="left:26px;top:617px;width:1231px;height:1px;background:#d4d4d4;"></div>
<div class="a" style="left:26px;top:634px;width:1231px;height:1px;background:#d4d4d4;"></div>
<div class="a" style="left:26px;top:651px;width:1231px;height:1px;background:#d4d4d4;"></div>
<div class="a" style="left:26px;top:668px;width:1231px;height:1px;background:#d4d4d4;"></div>
<div class="a" style="left:379px;top:227px;width:135px;height:33px;background:#b8cce4;"></div>
<div class="a" style="left:685px;top:227px;width:572px;height:33px;background:#b8cce4;"></div>
<div class="a" style="left:379px;top:261px;width:98px;height:16px;background:#2f5a8f;"></div>
<div class="a" style="left:478px;top:261px;width:36px;height:16px;background:#2f5a8f;"></div>
<div class="a" style="left:536px;top:261px;width:50px;height:16px;background:#2f5a8f;"></div>
<div class="a" style="left:608px;top:261px;width:55px;height:16px;background:#2f5a8f;"></div>
<div class="a" style="left:685px;top:261px;width:50px;height:16px;background:#2f5a8f;"></div>
<div class="a" style="left:736px;top:261px;width:50px;height:16px;background:#2f5a8f;"></div>
<div class="a" style="left:787px;top:261px;width:50px;height:16px;background:#2f5a8f;"></div>
<div class="a" style="left:838px;top:261px;width:50px;height:16px;background:#2f5a8f;"></div>
<div class="a" style="left:889px;top:261px;width:50px;height:16px;background:#2f5a8f;"></div>
<div class="a" style="left:940px;top:261px;width:50px;height:16px;background:#2f5a8f;"></div>
<div class="a" style="left:991px;top:261px;width:50px;height:16px;background:#2f5a8f;"></div>
<div class="a" style="left:1042px;top:261px;width:50px;height:16px;background:#2f5a8f;"></div>
<div class="a" style="left:1093px;top:261px;width:50px;height:16px;background:#2f5a8f;"></div>
<div class="a" style="left:1144px;top:261px;width:50px;height:16px;background:#2f5a8f;"></div>
<div class="a" style="left:1195px;top:261px;width:50px;height:16px;background:#2f5a8f;"></div>
<div class="a" style="left:1246px;top:261px;width:11px;height:16px;background:#2f5a8f;"></div>
<div class="a" style="left:26px;top:278px;width:352px;height:16px;background:#f2f2f2;"></div>
<div class="a" style="left:379px;top:278px;width:98px;height:16px;background:#f2f2f2;"></div>
<div class="a" style="left:478px;top:278px;width:36px;height:16px;background:#f2f2f2;"></div>
<div class="a" style="left:536px;top:278px;width:50px;height:16px;background:#f2f2f2;"></div>
<div class="a" style="left:608px;top:278px;width:55px;height:16px;background:#f7f7f7;"></div>
<div class="a" style="left:685px;top:278px;width:50px;height:16px;background:#f2f2f2;"></div>
<div class="a" style="left:736px;top:278px;width:50px;height:16px;background:#f2f2f2;"></div>
<div class="a" style="left:787px;top:278px;width:50px;height:16px;background:#f2f2f2;"></div>
<div class="a" style="left:838px;top:278px;width:50px;height:16px;background:#f2f2f2;"></div>
<div class="a" style="left:889px;top:278px;width:50px;height:16px;background:#f2f2f2;"></div>
<div class="a" style="left:940px;top:278px;width:50px;height:16px;background:#f2f2f2;"></div>
<div class="a" style="left:991px;top:278px;width:50px;height:16px;background:#f2f2f2;"></div>
<div class="a" style="left:1042px;top:278px;width:50px;height:16px;background:#f2f2f2;"></div>
<div class="a" style="left:1093px;top:278px;width:50px;height:16px;background:#f2f2f2;"></div>
<div class="a" style="left:1144px;top:278px;width:50px;height:16px;background:#f2f2f2;"></div>
<div class="a" style="left:1195px;top:278px;width:50px;height:16px;background:#f2f2f2;"></div>
<div class="a" style="left:1246px;top:278px;width:11px;height:16px;background:#f2f2f2;"></div>
<div class="a" style="left:26px;top:295px;width:352px;height:16px;background:#f2f2f2;"></div>
<div class="a" style="left:379px;top:295px;width:98px;height:16px;background:#f2f2f2;"></div>
<div class="a" style="left:478px;top:295px;width:36px;height:16px;background:#f2f2f2;"></div>
<div class="a" style="left:536px;top:295px;width:50px;height:16px;background:#f2f2f2;"></div>
<div class="a" style="left:608px;top:295px;width:55px;height:16px;background:#c4c4c4;"></div>
<div class="a" style="left:685px;top:295px;width:50px;height:16px;background:#f2f2f2;"></div>
<div class="a" style="left:736px;top:295px;width:50px;height:16px;background:#f2f2f2;"></div>
<div class="a" style="left:787px;top:295px;width:50px;height:16px;background:#f2f2f2;"></div>
<div class="a" style="left:838px;top:295px;width:50px;height:16px;background:#f2f2f2;"></div>
<div class="a" style="left:889px;top:295px;width:50px;height:16px;background:#f2f2f2;"></div>
<div class="a" style="left:940px;top:295px;width:50px;height:16px;background:#f2f2f2;"></div>
<div class="a" style="left:991px;top:295px;width:50px;height:16px;background:#f2f2f2;"></div>
<div class="a" style="left:1042px;top:295px;width:50px;height:16px;background:#f2f2f2;"></div>
<div class="a" style="left:1093px;top:295px;width:50px;height:16px;background:#f2f2f2;"></div>
<div class="a" style="left:1144px;top:295px;width:50px;height:16px;background:#f2f2f2;"></div>
<div class="a" style="left:1195px;top:295px;width:50px;height:16px;background:#f2f2f2;"></div>
<div class="a" style="left:1246px;top:295px;width:11px;height:16px;background:#f2f2f2;"></div>
<div class="a" style="left:26px;top:312px;width:352px;height:16px;background:#f2f2f2;"></div>
<div class="a" style="left:379px;top:312px;width:98px;height:16px;background:#f2f2f2;"></div>
<div class="a" style="left:478px;top:312px;width:36px;height:16px;background:#f2f2f2;"></div>
<div class="a" style="left:536px;top:312px;width:50px;height:16px;background:#f2f2f2;"></div>
<div class="a" style="left:608px;top:312px;width:55px;height:16px;background:#c4c4c4;"></div>
<div class="a" style="left:685px;top:312px;width:50px;height:16px;background:#f2f2f2;"></div>
<div class="a" style="left:736px;top:312px;width:50px;height:16px;background:#f2f2f2;"></div>
<div class="a" style="left:787px;top:312px;width:50px;height:16px;background:#f2f2f2;"></div>
<div class="a" style="left:838px;top:312px;width:50px;height:16px;background:#f2f2f2;"></div>
<div class="a" style="left:889px;top:312px;width:50px;height:16px;background:#f2f2f2;"></div>
<div class="a" style="left:940px;top:312px;width:50px;height:16px;background:#f2f2f2;"></div>
<div class="a" style="left:991px;top:312px;width:50px;height:16px;background:#f2f2f2;"></div>
<div class="a" style="left:1042px;top:312px;width:50px;height:16px;background:#f2f2f2;"></div>
<div class="a" style="left:1093px;top:312px;width:50px;height:16px;background:#f2f2f2;"></div>
<div class="a" style="left:1144px;top:312px;width:50px;height:16px;background:#f2f2f2;"></div>
<div class="a" style="left:1195px;top:312px;width:50px;height:16px;background:#f2f2f2;"></div>
<div class="a" style="left:1246px;top:312px;width:11px;height:16px;background:#f2f2f2;"></div>
<div class="a" style="left:26px;top:329px;width:352px;height:16px;background:#f2f2f2;"></div>
<div class="a" style="left:379px;top:329px;width:98px;height:16px;background:#f2f2f2;"></div>
<div class="a" style="left:478px;top:329px;width:36px;height:16px;background:#f2f2f2;"></div>
<div class="a" style="left:536px;top:329px;width:50px;height:16px;background:#f2f2f2;"></div>
<div class="a" style="left:608px;top:329px;width:55px;height:16px;background:#c4c4c4;"></div>
<div class="a" style="left:685px;top:329px;width:50px;height:16px;background:#f2f2f2;"></div>
<div class="a" style="left:736px;top:329px;width:50px;height:16px;background:#f2f2f2;"></div>
<div class="a" style="left:787px;top:329px;width:50px;height:16px;background:#f2f2f2;"></div>
<div class="a" style="left:838px;top:329px;width:50px;height:16px;background:#f2f2f2;"></div>
<div class="a" style="left:889px;top:329px;width:50px;height:16px;background:#f2f2f2;"></div>
<div class="a" style="left:940px;top:329px;width:50px;height:16px;background:#f2f2f2;"></div>
<div class="a" style="left:991px;top:329px;width:50px;height:16px;background:#f2f2f2;"></div>
<div class="a" style="left:1042px;top:329px;width:50px;height:16px;background:#f2f2f2;"></div>
<div class="a" style="left:1093px;top:329px;width:50px;height:16px;background:#f2f2f2;"></div>
<div class="a" style="left:1144px;top:329px;width:50px;height:16px;background:#f2f2f2;"></div>
<div class="a" style="left:1195px;top:329px;width:50px;height:16px;background:#f2f2f2;"></div>
<div class="a" style="left:1246px;top:329px;width:11px;height:16px;background:#f2f2f2;"></div>
<div class="a" style="left:26px;top:346px;width:352px;height:16px;background:#f2f2f2;"></div>
<div class="a" style="left:379px;top:346px;width:98px;height:16px;background:#f2f2f2;"></div>
<div class="a" style="left:478px;top:346px;width:36px;height:16px;background:#f2f2f2;"></div>
<div class="a" style="left:536px;top:346px;width:50px;height:16px;background:#f2f2f2;"></div>
<div class="a" style="left:608px;top:346px;width:55px;height:16px;background:#c4c4c4;"></div>
<div class="a" style="left:685px;top:346px;width:50px;height:16px;background:#f2f2f2;"></div>
<div class="a" style="left:736px;top:346px;width:50px;height:16px;background:#f2f2f2;"></div>
<div class="a" style="left:787px;top:346px;width:50px;height:16px;background:#f2f2f2;"></div>
<div class="a" style="left:838px;top:346px;width:50px;height:16px;background:#f2f2f2;"></div>
<div class="a" style="left:889px;top:346px;width:50px;height:16px;background:#f2f2f2;"></div>
<div class="a" style="left:940px;top:346px;width:50px;height:16px;background:#f2f2f2;"></div>
<div class="a" style="left:991px;top:346px;width:50px;height:16px;background:#f2f2f2;"></div>
<div class="a" style="left:1042px;top:346px;width:50px;height:16px;background:#f2f2f2;"></div>
<div class="a" style="left:1093px;top:346px;width:50px;height:16px;background:#f2f2f2;"></div>
<div class="a" style="left:1144px;top:346px;width:50px;height:16px;background:#f2f2f2;"></div>
<div class="a" style="left:1195px;top:346px;width:50px;height:16px;background:#f2f2f2;"></div>
<div class="a" style="left:1246px;top:346px;width:11px;height:16px;background:#f2f2f2;"></div>
<div class="a" style="left:26px;top:363px;width:352px;height:16px;background:#f2f2f2;"></div>
<div class="a" style="left:379px;top:363px;width:98px;height:16px;background:#f2f2f2;"></div>
<div class="a" style="left:478px;top:363px;width:36px;height:16px;background:#f2f2f2;"></div>
<div class="a" style="left:536px;top:363px;width:50px;height:16px;background:#f2f2f2;"></div>
<div class="a" style="left:608px;top:363px;width:55px;height:16px;background:#c4c4c4;"></div>
<div class="a" style="left:685px;top:363px;width:50px;height:16px;background:#f2f2f2;"></div>
<div class="a" style="left:736px;top:363px;width:50px;height:16px;background:#f2f2f2;"></div>
<div class="a" style="left:787px;top:363px;width:50px;height:16px;background:#f2f2f2;"></div>
<div class="a" style="left:838px;top:363px;width:50px;height:16px;background:#f2f2f2;"></div>
<div class="a" style="left:889px;top:363px;width:50px;height:16px;background:#f2f2f2;"></div>
<div class="a" style="left:940px;top:363px;width:50px;height:16px;background:#f2f2f2;"></div>
<div class="a" style="left:991px;top:363px;width:50px;height:16px;background:#f2f2f2;"></div>
<div class="a" style="left:1042px;top:363px;width:50px;height:16px;background:#f2f2f2;"></div>
<div class="a" style="left:1093px;top:363px;width:50px;height:16px;background:#f2f2f2;"></div>
<div class="a" style="left:1144px;top:363px;width:50px;height:16px;background:#f2f2f2;"></div>
<div class="a" style="left:1195px;top:363px;width:50px;height:16px;background:#f2f2f2;"></div>
<div class="a" style="left:1246px;top:363px;width:11px;height:16px;background:#f2f2f2;"></div>
<div class="a" style="left:26px;top:380px;width:352px;height:16px;background:#bfbfbf;"></div>
<div class="a" style="left:379px;top:380px;width:98px;height:16px;background:#bfbfbf;"></div>
<div class="a" style="left:478px;top:380px;width:36px;height:16px;background:#bfbfbf;"></div>
<div class="a" style="left:536px;top:380px;width:50px;height:16px;background:#bfbfbf;"></div>
<div class="a" style="left:608px;top:380px;width:55px;height:16px;background:#c4c4c4;"></div>
<div class="a" style="left:685px;top:380px;width:50px;height:16px;background:#bfbfbf;"></div>
<div class="a" style="left:736px;top:380px;width:50px;height:16px;background:#bfbfbf;"></div>
<div class="a" style="left:787px;top:380px;width:50px;height:16px;background:#bfbfbf;"></div>
<div class="a" style="left:838px;top:380px;width:50px;height:16px;background:#bfbfbf;"></div>
<div class="a" style="left:889px;top:380px;width:50px;height:16px;background:#bfbfbf;"></div>
<div class="a" style="left:940px;top:380px;width:50px;height:16px;background:#bfbfbf;"></div>
<div class="a" style="left:991px;top:380px;width:50px;height:16px;background:#bfbfbf;"></div>
<div class="a" style="left:1042px;top:380px;width:50px;height:16px;background:#bfbfbf;"></div>
<div class="a" style="left:1093px;top:380px;width:50px;height:16px;background:#bfbfbf;"></div>
<div class="a" style="left:1144px;top:380px;width:50px;height:16px;background:#bfbfbf;"></div>
<div class="a" style="left:1195px;top:380px;width:50px;height:16px;background:#bfbfbf;"></div>
<div class="a" style="left:1246px;top:380px;width:11px;height:16px;background:#bfbfbf;"></div>
<div class="a" style="left:26px;top:397px;width:352px;height:16px;background:#f2f2f2;"></div>
<div class="a" style="left:379px;top:397px;width:98px;height:16px;background:#f2f2f2;"></div>
<div class="a" style="left:478px;top:397px;width:36px;height:16px;background:#f2f2f2;"></div>
<div class="a" style="left:536px;top:397px;width:50px;height:16px;background:#f2f2f2;"></div>
<div class="a" style="left:608px;top:397px;width:55px;height:16px;background:#c4c4c4;"></div>
<div class="a" style="left:685px;top:397px;width:50px;height:16px;background:#f2f2f2;"></div>
<div class="a" style="left:736px;top:397px;width:50px;height:16px;background:#f2f2f2;"></div>
<div class="a" style="left:787px;top:397px;width:50px;height:16px;background:#f2f2f2;"></div>
<div class="a" style="left:838px;top:397px;width:50px;height:16px;background:#f2f2f2;"></div>
<div class="a" style="left:889px;top:397px;width:50px;height:16px;background:#f2f2f2;"></div>
<div class="a" style="left:940px;top:397px;width:50px;height:16px;background:#f2f2f2;"></div>
<div class="a" style="left:991px;top:397px;width:50px;height:16px;background:#f2f2f2;"></div>
<div class="a" style="left:1042px;top:397px;width:50px;height:16px;background:#f2f2f2;"></div>
<div class="a" style="left:1093px;top:397px;width:50px;height:16px;background:#f2f2f2;"></div>
<div class="a" style="left:1144px;top:397px;width:50px;height:16px;background:#f2f2f2;"></div>
<div class="a" style="left:1195px;top:397px;width:50px;height:16px;background:#f2f2f2;"></div>
<div class="a" style="left:1246px;top:397px;width:11px;height:16px;background:#f2f2f2;"></div>
<div class="a" style="left:26px;top:414px;width:352px;height:16px;background:#f2f2f2;"></div>
<div class="a" style="left:379px;top:414px;width:98px;height:16px;background:#f2f2f2;"></div>
<div class="a" style="left:478px;top:414px;width:36px;height:16px;background:#f2f2f2;"></div>
<div class="a" style="left:536px;top:414px;width:50px;height:16px;background:#f2f2f2;"></div>
<div class="a" style="left:608px;top:414px;width:55px;height:16px;background:#c4c4c4;"></div>
<div class="a" style="left:685px;top:414px;width:50px;height:16px;background:#f2f2f2;"></div>
<div class="a" style="left:736px;top:414px;width:50px;height:16px;background:#f2f2f2;"></div>
<div class="a" style="left:787px;top:414px;width:50px;height:16px;background:#f2f2f2;"></div>
<div class="a" style="left:838px;top:414px;width:50px;height:16px;background:#f2f2f2;"></div>
<div class="a" style="left:889px;top:414px;width:50px;height:16px;background:#f2f2f2;"></div>
<div class="a" style="left:940px;top:414px;width:50px;height:16px;background:#f2f2f2;"></div>
<div class="a" style="left:991px;top:414px;width:50px;height:16px;background:#f2f2f2;"></div>
<div class="a" style="left:1042px;top:414px;width:50px;height:16px;background:#f2f2f2;"></div>
<div class="a" style="left:1093px;top:414px;width:50px;height:16px;background:#f2f2f2;"></div>
<div class="a" style="left:1144px;top:414px;width:50px;height:16px;background:#f2f2f2;"></div>
<div class="a" style="left:1195px;top:414px;width:50px;height:16px;background:#f2f2f2;"></div>
<div class="a" style="left:1246px;top:414px;width:11px;height:16px;background:#f2f2f2;"></div>
<div class="a" style="left:26px;top:431px;width:352px;height:16px;background:#f2f2f2;"></div>
<div class="a" style="left:379px;top:431px;width:98px;height:16px;background:#f2f2f2;"></div>
<div class="a" style="left:478px;top:431px;width:36px;height:16px;background:#f2f2f2;"></div>
<div class="a" style="left:536px;top:431px;width:50px;height:16px;background:#f2f2f2;"></div>
<div class="a" style="left:608px;top:431px;width:55px;height:16px;background:#c4c4c4;"></div>
<div class="a" style="left:685px;top:431px;width:50px;height:16px;background:#f2f2f2;"></div>
<div class="a" style="left:736px;top:431px;width:50px;height:16px;background:#f2f2f2;"></div>
<div class="a" style="left:787px;top:431px;width:50px;height:16px;background:#f2f2f2;"></div>
<div class="a" style="left:838px;top:431px;width:50px;height:16px;background:#f2f2f2;"></div>
<div class="a" style="left:889px;top:431px;width:50px;height:16px;background:#f2f2f2;"></div>
<div class="a" style="left:940px;top:431px;width:50px;height:16px;background:#f2f2f2;"></div>
<div class="a" style="left:991px;top:431px;width:50px;height:16px;background:#f2f2f2;"></div>
<div class="a" style="left:1042px;top:431px;width:50px;height:16px;background:#f2f2f2;"></div>
<div class="a" style="left:1093px;top:431px;width:50px;height:16px;background:#f2f2f2;"></div>
<div class="a" style="left:1144px;top:431px;width:50px;height:16px;background:#f2f2f2;"></div>
<div class="a" style="left:1195px;top:431px;width:50px;height:16px;background:#f2f2f2;"></div>
<div class="a" style="left:1246px;top:431px;width:11px;height:16px;background:#f2f2f2;"></div>
<div class="a" style="left:26px;top:448px;width:352px;height:16px;background:#f2f2f2;"></div>
<div class="a" style="left:379px;top:448px;width:98px;height:16px;background:#f2f2f2;"></div>
<div class="a" style="left:478px;top:448px;width:36px;height:16px;background:#f2f2f2;"></div>
<div class="a" style="left:536px;top:448px;width:50px;height:16px;background:#f2f2f2;"></div>
<div class="a" style="left:608px;top:448px;width:55px;height:16px;background:#c4c4c4;"></div>
<div class="a" style="left:685px;top:448px;width:50px;height:16px;background:#f2f2f2;"></div>
<div class="a" style="left:736px;top:448px;width:50px;height:16px;background:#f2f2f2;"></div>
<div class="a" style="left:787px;top:448px;width:50px;height:16px;background:#f2f2f2;"></div>
<div class="a" style="left:838px;top:448px;width:50px;height:16px;background:#f2f2f2;"></div>
<div class="a" style="left:889px;top:448px;width:50px;height:16px;background:#f2f2f2;"></div>
<div class="a" style="left:940px;top:448px;width:50px;height:16px;background:#f2f2f2;"></div>
<div class="a" style="left:991px;top:448px;width:50px;height:16px;background:#f2f2f2;"></div>
<div class="a" style="left:1042px;top:448px;width:50px;height:16px;background:#f2f2f2;"></div>
<div class="a" style="left:1093px;top:448px;width:50px;height:16px;background:#f2f2f2;"></div>
<div class="a" style="left:1144px;top:448px;width:50px;height:16px;background:#f2f2f2;"></div>
<div class="a" style="left:1195px;top:448px;width:50px;height:16px;background:#f2f2f2;"></div>
<div class="a" style="left:1246px;top:448px;width:11px;height:16px;background:#f2f2f2;"></div>
<div class="a" style="left:26px;top:465px;width:352px;height:16px;background:#f2f2f2;"></div>
<div class="a" style="left:379px;top:465px;width:98px;height:16px;background:#f2f2f2;"></div>
<div class="a" style="left:478px;top:465px;width:36px;height:16px;background:#f2f2f2;"></div>
<div class="a" style="left:536px;top:465px;width:50px;height:16px;background:#f2f2f2;"></div>
<div class="a" style="left:608px;top:465px;width:55px;height:16px;background:#c4c4c4;"></div>
<div class="a" style="left:685px;top:465px;width:50px;height:16px;background:#f2f2f2;"></div>
<div class="a" style="left:736px;top:465px;width:50px;height:16px;background:#f2f2f2;"></div>
<div class="a" style="left:787px;top:465px;width:50px;height:16px;background:#f2f2f2;"></div>
<div class="a" style="left:838px;top:465px;width:50px;height:16px;background:#f2f2f2;"></div>
<div class="a" style="left:889px;top:465px;width:50px;height:16px;background:#f2f2f2;"></div>
<div class="a" style="left:940px;top:465px;width:50px;height:16px;background:#f2f2f2;"></div>
<div class="a" style="left:991px;top:465px;width:50px;height:16px;background:#f2f2f2;"></div>
<div class="a" style="left:1042px;top:465px;width:50px;height:16px;background:#f2f2f2;"></div>
<div class="a" style="left:1093px;top:465px;width:50px;height:16px;background:#f2f2f2;"></div>
<div class="a" style="left:1144px;top:465px;width:50px;height:16px;background:#f2f2f2;"></div>
<div class="a" style="left:1195px;top:465px;width:50px;height:16px;background:#f2f2f2;"></div>
<div class="a" style="left:1246px;top:465px;width:11px;height:16px;background:#f2f2f2;"></div>
<div class="a" style="left:26px;top:482px;width:352px;height:16px;background:#f2f2f2;"></div>
<div class="a" style="left:379px;top:482px;width:98px;height:16px;background:#f2f2f2;"></div>
<div class="a" style="left:478px;top:482px;width:36px;height:16px;background:#f2f2f2;"></div>
<div class="a" style="left:536px;top:482px;width:50px;height:16px;background:#f2f2f2;"></div>
<div class="a" style="left:608px;top:482px;width:55px;height:16px;background:#c4c4c4;"></div>
<div class="a" style="left:685px;top:482px;width:50px;height:16px;background:#f2f2f2;"></div>
<div class="a" style="left:736px;top:482px;width:50px;height:16px;background:#f2f2f2;"></div>
<div class="a" style="left:787px;top:482px;width:50px;height:16px;background:#f2f2f2;"></div>
<div class="a" style="left:838px;top:482px;width:50px;height:16px;background:#f2f2f2;"></div>
<div class="a" style="left:889px;top:482px;width:50px;height:16px;background:#f2f2f2;"></div>
<div class="a" style="left:940px;top:482px;width:50px;height:16px;background:#f2f2f2;"></div>
<div class="a" style="left:991px;top:482px;width:50px;height:16px;background:#f2f2f2;"></div>
<div class="a" style="left:1042px;top:482px;width:50px;height:16px;background:#f2f2f2;"></div>
<div class="a" style="left:1093px;top:482px;width:50px;height:16px;background:#f2f2f2;"></div>
<div class="a" style="left:1144px;top:482px;width:50px;height:16px;background:#f2f2f2;"></div>
<div class="a" style="left:1195px;top:482px;width:50px;height:16px;background:#f2f2f2;"></div>
<div class="a" style="left:1246px;top:482px;width:11px;height:16px;background:#f2f2f2;"></div>
<div class="a" style="left:26px;top:499px;width:352px;height:16px;background:#f2f2f2;"></div>
<div class="a" style="left:379px;top:499px;width:98px;height:16px;background:#f2f2f2;"></div>
<div class="a" style="left:478px;top:499px;width:36px;height:16px;background:#f2f2f2;"></div>
<div class="a" style="left:536px;top:499px;width:50px;height:16px;background:#f2f2f2;"></div>
<div class="a" style="left:608px;top:499px;width:55px;height:16px;background:#c4c4c4;"></div>
<div class="a" style="left:685px;top:499px;width:50px;height:16px;background:#f2f2f2;"></div>
<div class="a" style="left:736px;top:499px;width:50px;height:16px;background:#f2f2f2;"></div>
<div class="a" style="left:787px;top:499px;width:50px;height:16px;background:#f2f2f2;"></div>
<div class="a" style="left:838px;top:499px;width:50px;height:16px;background:#f2f2f2;"></div>
<div class="a" style="left:889px;top:499px;width:50px;height:16px;background:#f2f2f2;"></div>
<div class="a" style="left:940px;top:499px;width:50px;height:16px;background:#f2f2f2;"></div>
<div class="a" style="left:991px;top:499px;width:50px;height:16px;background:#f2f2f2;"></div>
<div class="a" style="left:1042px;top:499px;width:50px;height:16px;background:#f2f2f2;"></div>
<div class="a" style="left:1093px;top:499px;width:50px;height:16px;background:#f2f2f2;"></div>
<div class="a" style="left:1144px;top:499px;width:50px;height:16px;background:#f2f2f2;"></div>
<div class="a" style="left:1195px;top:499px;width:50px;height:16px;background:#f2f2f2;"></div>
<div class="a" style="left:1246px;top:499px;width:11px;height:16px;background:#f2f2f2;"></div>
<div class="a" style="left:26px;top:516px;width:352px;height:16px;background:#f2f2f2;"></div>
<div class="a" style="left:379px;top:516px;width:98px;height:16px;background:#f2f2f2;"></div>
<div class="a" style="left:478px;top:516px;width:36px;height:16px;background:#f2f2f2;"></div>
<div class="a" style="left:536px;top:516px;width:50px;height:16px;background:#f2f2f2;"></div>
<div class="a" style="left:608px;top:516px;width:55px;height:16px;background:#c4c4c4;"></div>
<div class="a" style="left:685px;top:516px;width:50px;height:16px;background:#f2f2f2;"></div>
<div class="a" style="left:736px;top:516px;width:50px;height:16px;background:#f2f2f2;"></div>
<div class="a" style="left:787px;top:516px;width:50px;height:16px;background:#f2f2f2;"></div>
<div class="a" style="left:838px;top:516px;width:50px;height:16px;background:#f2f2f2;"></div>
<div class="a" style="left:889px;top:516px;width:50px;height:16px;background:#f2f2f2;"></div>
<div class="a" style="left:940px;top:516px;width:50px;height:16px;background:#f2f2f2;"></div>
<div class="a" style="left:991px;top:516px;width:50px;height:16px;background:#f2f2f2;"></div>
<div class="a" style="left:1042px;top:516px;width:50px;height:16px;background:#f2f2f2;"></div>
<div class="a" style="left:1093px;top:516px;width:50px;height:16px;background:#f2f2f2;"></div>
<div class="a" style="left:1144px;top:516px;width:50px;height:16px;background:#f2f2f2;"></div>
<div class="a" style="left:1195px;top:516px;width:50px;height:16px;background:#f2f2f2;"></div>
<div class="a" style="left:1246px;top:516px;width:11px;height:16px;background:#f2f2f2;"></div>
<div class="a" style="left:26px;top:533px;width:352px;height:16px;background:#f2f2f2;"></div>
<div class="a" style="left:379px;top:533px;width:98px;height:16px;background:#f2f2f2;"></div>
<div class="a" style="left:478px;top:533px;width:36px;height:16px;background:#f2f2f2;"></div>
<div class="a" style="left:536px;top:533px;width:50px;height:16px;background:#f2f2f2;"></div>
<div class="a" style="left:608px;top:533px;width:55px;height:16px;background:#c4c4c4;"></div>
<div class="a" style="left:685px;top:533px;width:50px;height:16px;background:#f2f2f2;"></div>
<div class="a" style="left:736px;top:533px;width:50px;height:16px;background:#f2f2f2;"></div>
<div class="a" style="left:787px;top:533px;width:50px;height:16px;background:#f2f2f2;"></div>
<div class="a" style="left:838px;top:533px;width:50px;height:16px;background:#f2f2f2;"></div>
<div class="a" style="left:889px;top:533px;width:50px;height:16px;background:#f2f2f2;"></div>
<div class="a" style="left:940px;top:533px;width:50px;height:16px;background:#f2f2f2;"></div>
<div class="a" style="left:991px;top:533px;width:50px;height:16px;background:#f2f2f2;"></div>
<div class="a" style="left:1042px;top:533px;width:50px;height:16px;background:#f2f2f2;"></div>
<div class="a" style="left:1093px;top:533px;width:50px;height:16px;background:#f2f2f2;"></div>
<div class="a" style="left:1144px;top:533px;width:50px;height:16px;background:#f2f2f2;"></div>
<div class="a" style="left:1195px;top:533px;width:50px;height:16px;background:#f2f2f2;"></div>
<div class="a" style="left:1246px;top:533px;width:11px;height:16px;background:#f2f2f2;"></div>
<div class="a" style="left:26px;top:550px;width:352px;height:16px;background:#f2f2f2;"></div>
<div class="a" style="left:379px;top:550px;width:98px;height:16px;background:#f2f2f2;"></div>
<div class="a" style="left:478px;top:550px;width:36px;height:16px;background:#f2f2f2;"></div>
<div class="a" style="left:536px;top:550px;width:50px;height:16px;background:#f2f2f2;"></div>
<div class="a" style="left:608px;top:550px;width:55px;height:16px;background:#c4c4c4;"></div>
<div class="a" style="left:685px;top:550px;width:50px;height:16px;background:#f2f2f2;"></div>
<div class="a" style="left:736px;top:550px;width:50px;height:16px;background:#f2f2f2;"></div>
<div class="a" style="left:787px;top:550px;width:50px;height:16px;background:#f2f2f2;"></div>
<div class="a" style="left:838px;top:550px;width:50px;height:16px;background:#f2f2f2;"></div>
<div class="a" style="left:889px;top:550px;width:50px;height:16px;background:#f2f2f2;"></div>
<div class="a" style="left:940px;top:550px;width:50px;height:16px;background:#f2f2f2;"></div>
<div class="a" style="left:991px;top:550px;width:50px;height:16px;background:#f2f2f2;"></div>
<div class="a" style="left:1042px;top:550px;width:50px;height:16px;background:#f2f2f2;"></div>
<div class="a" style="left:1093px;top:550px;width:50px;height:16px;background:#f2f2f2;"></div>
<div class="a" style="left:1144px;top:550px;width:50px;height:16px;background:#f2f2f2;"></div>
<div class="a" style="left:1195px;top:550px;width:50px;height:16px;background:#f2f2f2;"></div>
<div class="a" style="left:1246px;top:550px;width:11px;height:16px;background:#f2f2f2;"></div>
<div class="a" style="left:26px;top:567px;width:352px;height:16px;background:#f2f2f2;"></div>
<div class="a" style="left:379px;top:567px;width:98px;height:16px;background:#f2f2f2;"></div>
<div class="a" style="left:478px;top:567px;width:36px;height:16px;background:#f2f2f2;"></div>
<div class="a" style="left:536px;top:567px;width:50px;height:16px;background:#f2f2f2;"></div>
<div class="a" style="left:608px;top:567px;width:55px;height:16px;background:#c4c4c4;"></div>
<div class="a" style="left:685px;top:567px;width:50px;height:16px;background:#f2f2f2;"></div>
<div class="a" style="left:736px;top:567px;width:50px;height:16px;background:#f2f2f2;"></div>
<div class="a" style="left:787px;top:567px;width:50px;height:16px;background:#f2f2f2;"></div>
<div class="a" style="left:838px;top:567px;width:50px;height:16px;background:#f2f2f2;"></div>
<div class="a" style="left:889px;top:567px;width:50px;height:16px;background:#f2f2f2;"></div>
<div class="a" style="left:940px;top:567px;width:50px;height:16px;background:#f2f2f2;"></div>
<div class="a" style="left:991px;top:567px;width:50px;height:16px;background:#f2f2f2;"></div>
<div class="a" style="left:1042px;top:567px;width:50px;height:16px;background:#f2f2f2;"></div>
<div class="a" style="left:1093px;top:567px;width:50px;height:16px;background:#f2f2f2;"></div>
<div class="a" style="left:1144px;top:567px;width:50px;height:16px;background:#f2f2f2;"></div>
<div class="a" style="left:1195px;top:567px;width:50px;height:16px;background:#f2f2f2;"></div>
<div class="a" style="left:1246px;top:567px;width:11px;height:16px;background:#f2f2f2;"></div>
<div class="a" style="left:26px;top:584px;width:352px;height:16px;background:#f2f2f2;"></div>
<div class="a" style="left:379px;top:584px;width:98px;height:16px;background:#f2f2f2;"></div>
<div class="a" style="left:478px;top:584px;width:36px;height:16px;background:#f2f2f2;"></div>
<div class="a" style="left:536px;top:584px;width:50px;height:16px;background:#f2f2f2;"></div>
<div class="a" style="left:608px;top:584px;width:55px;height:16px;background:#c4c4c4;"></div>
<div class="a" style="left:685px;top:584px;width:50px;height:16px;background:#f2f2f2;"></div>
<div class="a" style="left:736px;top:584px;width:50px;height:16px;background:#f2f2f2;"></div>
<div class="a" style="left:787px;top:584px;width:50px;height:16px;background:#f2f2f2;"></div>
<div class="a" style="left:838px;top:584px;width:50px;height:16px;background:#f2f2f2;"></div>
<div class="a" style="left:889px;top:584px;width:50px;height:16px;background:#f2f2f2;"></div>
<div class="a" style="left:940px;top:584px;width:50px;height:16px;background:#f2f2f2;"></div>
<div class="a" style="left:991px;top:584px;width:50px;height:16px;background:#f2f2f2;"></div>
<div class="a" style="left:1042px;top:584px;width:50px;height:16px;background:#f2f2f2;"></div>
<div class="a" style="left:1093px;top:584px;width:50px;height:16px;background:#f2f2f2;"></div>
<div class="a" style="left:1144px;top:584px;width:50px;height:16px;background:#f2f2f2;"></div>
<div class="a" style="left:1195px;top:584px;width:50px;height:16px;background:#f2f2f2;"></div>
<div class="a" style="left:1246px;top:584px;width:11px;height:16px;background:#f2f2f2;"></div>
<div class="a" style="left:26px;top:601px;width:352px;height:16px;background:#f2f2f2;"></div>
<div class="a" style="left:379px;top:601px;width:98px;height:16px;background:#f2f2f2;"></div>
<div class="a" style="left:478px;top:601px;width:36px;height:16px;background:#f2f2f2;"></div>
<div class="a" style="left:536px;top:601px;width:50px;height:16px;background:#f2f2f2;"></div>
<div class="a" style="left:608px;top:601px;width:55px;height:16px;background:#c4c4c4;"></div>
<div class="a" style="left:685px;top:601px;width:50px;height:16px;background:#f2f2f2;"></div>
<div class="a" style="left:736px;top:601px;width:50px;height:16px;background:#f2f2f2;"></div>
<div class="a" style="left:787px;top:601px;width:50px;height:16px;background:#f2f2f2;"></div>
<div class="a" style="left:838px;top:601px;width:50px;height:16px;background:#f2f2f2;"></div>
<div class="a" style="left:889px;top:601px;width:50px;height:16px;background:#f2f2f2;"></div>
<div class="a" style="left:940px;top:601px;width:50px;height:16px;background:#f2f2f2;"></div>
<div class="a" style="left:991px;top:601px;width:50px;height:16px;background:#f2f2f2;"></div>
<div class="a" style="left:1042px;top:601px;width:50px;height:16px;background:#f2f2f2;"></div>
<div class="a" style="left:1093px;top:601px;width:50px;height:16px;background:#f2f2f2;"></div>
<div class="a" style="left:1144px;top:601px;width:50px;height:16px;background:#f2f2f2;"></div>
<div class="a" style="left:1195px;top:601px;width:50px;height:16px;background:#f2f2f2;"></div>
<div class="a" style="left:1246px;top:601px;width:11px;height:16px;background:#f2f2f2;"></div>
<div class="a" style="left:26px;top:618px;width:352px;height:16px;background:#f2f2f2;"></div>
<div class="a" style="left:379px;top:618px;width:98px;height:16px;background:#f2f2f2;"></div>
<div class="a" style="left:478px;top:618px;width:36px;height:16px;background:#f2f2f2;"></div>
<div class="a" style="left:536px;top:618px;width:50px;height:16px;background:#f2f2f2;"></div>
<div class="a" style="left:608px;top:618px;width:55px;height:16px;background:#c4c4c4;"></div>
<div class="a" style="left:685px;top:618px;width:50px;height:16px;background:#f2f2f2;"></div>
<div class="a" style="left:736px;top:618px;width:50px;height:16px;background:#f2f2f2;"></div>
<div class="a" style="left:787px;top:618px;width:50px;height:16px;background:#f2f2f2;"></div>
<div class="a" style="left:838px;top:618px;width:50px;height:16px;background:#f2f2f2;"></div>
<div class="a" style="left:889px;top:618px;width:50px;height:16px;background:#f2f2f2;"></div>
<div class="a" style="left:940px;top:618px;width:50px;height:16px;background:#f2f2f2;"></div>
<div class="a" style="left:991px;top:618px;width:50px;height:16px;background:#f2f2f2;"></div>
<div class="a" style="left:1042px;top:618px;width:50px;height:16px;background:#f2f2f2;"></div>
<div class="a" style="left:1093px;top:618px;width:50px;height:16px;background:#f2f2f2;"></div>
<div class="a" style="left:1144px;top:618px;width:50px;height:16px;background:#f2f2f2;"></div>
<div class="a" style="left:1195px;top:618px;width:50px;height:16px;background:#f2f2f2;"></div>
<div class="a" style="left:1246px;top:618px;width:11px;height:16px;background:#f2f2f2;"></div>
<div class="a" style="left:26px;top:635px;width:352px;height:16px;background:#f2f2f2;"></div>
<div class="a" style="left:379px;top:635px;width:98px;height:16px;background:#f2f2f2;"></div>
<div class="a" style="left:478px;top:635px;width:36px;height:16px;background:#f2f2f2;"></div>
<div class="a" style="left:536px;top:635px;width:50px;height:16px;background:#f2f2f2;"></div>
<div class="a" style="left:608px;top:635px;width:55px;height:16px;background:#c4c4c4;"></div>
<div class="a" style="left:685px;top:635px;width:50px;height:16px;background:#f2f2f2;"></div>
<div class="a" style="left:736px;top:635px;width:50px;height:16px;background:#f2f2f2;"></div>
<div class="a" style="left:787px;top:635px;width:50px;height:16px;background:#f2f2f2;"></div>
<div class="a" style="left:838px;top:635px;width:50px;height:16px;background:#f2f2f2;"></div>
<div class="a" style="left:889px;top:635px;width:50px;height:16px;background:#f2f2f2;"></div>
<div class="a" style="left:940px;top:635px;width:50px;height:16px;background:#f2f2f2;"></div>
<div class="a" style="left:991px;top:635px;width:50px;height:16px;background:#f2f2f2;"></div>
<div class="a" style="left:1042px;top:635px;width:50px;height:16px;background:#f2f2f2;"></div>
<div class="a" style="left:1093px;top:635px;width:50px;height:16px;background:#f2f2f2;"></div>
<div class="a" style="left:1144px;top:635px;width:50px;height:16px;background:#f2f2f2;"></div>
<div class="a" style="left:1195px;top:635px;width:50px;height:16px;background:#f2f2f2;"></div>
<div class="a" style="left:1246px;top:635px;width:11px;height:16px;background:#f2f2f2;"></div>
<div class="a" style="left:26px;top:652px;width:352px;height:16px;background:#f2f2f2;"></div>
<div class="a" style="left:379px;top:652px;width:98px;height:16px;background:#f2f2f2;"></div>
<div class="a" style="left:478px;top:652px;width:36px;height:16px;background:#f2f2f2;"></div>
<div class="a" style="left:536px;top:652px;width:50px;height:16px;background:#f2f2f2;"></div>
<div class="a" style="left:608px;top:652px;width:55px;height:16px;background:#c4c4c4;"></div>
<div class="a" style="left:685px;top:652px;width:50px;height:16px;background:#f2f2f2;"></div>
<div class="a" style="left:736px;top:652px;width:50px;height:16px;background:#f2f2f2;"></div>
<div class="a" style="left:787px;top:652px;width:50px;height:16px;background:#f2f2f2;"></div>
<div class="a" style="left:838px;top:652px;width:50px;height:16px;background:#f2f2f2;"></div>
<div class="a" style="left:889px;top:652px;width:50px;height:16px;background:#f2f2f2;"></div>
<div class="a" style="left:940px;top:652px;width:50px;height:16px;background:#f2f2f2;"></div>
<div class="a" style="left:991px;top:652px;width:50px;height:16px;background:#f2f2f2;"></div>
<div class="a" style="left:1042px;top:652px;width:50px;height:16px;background:#f2f2f2;"></div>
<div class="a" style="left:1093px;top:652px;width:50px;height:16px;background:#f2f2f2;"></div>
<div class="a" style="left:1144px;top:652px;width:50px;height:16px;background:#f2f2f2;"></div>
<div class="a" style="left:1195px;top:652px;width:50px;height:16px;background:#f2f2f2;"></div>
<div class="a" style="left:1246px;top:652px;width:11px;height:16px;background:#f2f2f2;"></div>
<div class="a" style="left:26px;top:669px;width:352px;height:2px;background:#f2f2f2;"></div>
<div class="a" style="left:379px;top:669px;width:98px;height:2px;background:#f2f2f2;"></div>
<div class="a" style="left:478px;top:669px;width:36px;height:2px;background:#f2f2f2;"></div>
<div class="a" style="left:536px;top:669px;width:50px;height:2px;background:#f2f2f2;"></div>
<div class="a" style="left:608px;top:669px;width:55px;height:2px;background:#f2f2f2;"></div>
<div class="a" style="left:685px;top:669px;width:50px;height:2px;background:#f2f2f2;"></div>
<div class="a" style="left:736px;top:669px;width:50px;height:2px;background:#f2f2f2;"></div>
<div class="a" style="left:787px;top:669px;width:50px;height:2px;background:#f2f2f2;"></div>
<div class="a" style="left:838px;top:669px;width:50px;height:2px;background:#f2f2f2;"></div>
<div class="a" style="left:889px;top:669px;width:50px;height:2px;background:#f2f2f2;"></div>
<div class="a" style="left:940px;top:669px;width:50px;height:2px;background:#f2f2f2;"></div>
<div class="a" style="left:991px;top:669px;width:50px;height:2px;background:#f2f2f2;"></div>
<div class="a" style="left:1042px;top:669px;width:50px;height:2px;background:#f2f2f2;"></div>
<div class="a" style="left:1093px;top:669px;width:50px;height:2px;background:#f2f2f2;"></div>
<div class="a" style="left:1144px;top:669px;width:50px;height:2px;background:#f2f2f2;"></div>
<div class="a" style="left:1195px;top:669px;width:50px;height:2px;background:#f2f2f2;"></div>
<div class="a" style="left:1246px;top:669px;width:11px;height:2px;background:#f2f2f2;"></div>
<div class="a" style="left:0px;top:669px;width:25px;height:2px;background:#d5d5d5;"></div>
<div class="a" style="left:378px;top:226px;width:1px;height:445px;background:#111;"></div>
<div class="a" style="left:477px;top:260px;width:1px;height:411px;background:#111;"></div>
<div class="a" style="left:514px;top:260px;width:1px;height:411px;background:#111;"></div>
<div class="a" style="left:535px;top:260px;width:1px;height:411px;background:#111;"></div>
<div class="a" style="left:586px;top:260px;width:1px;height:411px;background:#111;"></div>
<div class="a" style="left:607px;top:260px;width:1px;height:411px;background:#111;"></div>
<div class="a" style="left:663px;top:260px;width:1px;height:411px;background:#111;"></div>
<div class="a" style="left:378px;top:226px;width:1px;height:445px;background:#111;"></div>
<div class="a" style="left:684px;top:226px;width:1px;height:445px;background:#111;"></div>
<div class="a" style="left:735px;top:260px;width:1px;height:411px;background:#111;"></div>
<div class="a" style="left:786px;top:260px;width:1px;height:411px;background:#111;"></div>
<div class="a" style="left:837px;top:260px;width:1px;height:411px;background:#111;"></div>
<div class="a" style="left:888px;top:260px;width:1px;height:411px;background:#111;"></div>
<div class="a" style="left:939px;top:260px;width:1px;height:411px;background:#111;"></div>
<div class="a" style="left:990px;top:260px;width:1px;height:411px;background:#111;"></div>
<div class="a" style="left:1041px;top:260px;width:1px;height:411px;background:#111;"></div>
<div class="a" style="left:1092px;top:260px;width:1px;height:411px;background:#111;"></div>
<div class="a" style="left:1143px;top:260px;width:1px;height:411px;background:#111;"></div>
<div class="a" style="left:1194px;top:260px;width:1px;height:411px;background:#111;"></div>
<div class="a" style="left:1245px;top:260px;width:1px;height:411px;background:#111;"></div>
<div class="a" style="left:378px;top:226px;width:1px;height:445px;background:#111;"></div>
<div class="a" style="left:378px;top:260px;width:136px;height:1px;background:#111;"></div>
<div class="a" style="left:535px;top:260px;width:52px;height:1px;background:#111;"></div>
<div class="a" style="left:607px;top:260px;width:57px;height:1px;background:#111;"></div>
<div class="a" style="left:684px;top:260px;width:573px;height:1px;background:#111;"></div>
<div class="a" style="left:26px;top:277px;width:488px;height:1px;background:#111;"></div>
<div class="a" style="left:535px;top:277px;width:52px;height:1px;background:#111;"></div>
<div class="a" style="left:607px;top:277px;width:57px;height:1px;background:#111;"></div>
<div class="a" style="left:684px;top:277px;width:573px;height:1px;background:#111;"></div>
<div class="a" style="left:26px;top:294px;width:488px;height:1px;background:#111;"></div>
<div class="a" style="left:535px;top:294px;width:52px;height:1px;background:#111;"></div>
<div class="a" style="left:607px;top:294px;width:57px;height:1px;background:#111;"></div>
<div class="a" style="left:684px;top:294px;width:573px;height:1px;background:#111;"></div>
<div class="a" style="left:26px;top:311px;width:488px;height:1px;background:#111;"></div>
<div class="a" style="left:535px;top:311px;width:52px;height:1px;background:#111;"></div>
<div class="a" style="left:607px;top:311px;width:57px;height:1px;background:#111;"></div>
<div class="a" style="left:684px;top:311px;width:573px;height:1px;background:#111;"></div>
<div class="a" style="left:26px;top:328px;width:488px;height:1px;background:#111;"></div>
<div class="a" style="left:535px;top:328px;width:52px;height:1px;background:#111;"></div>
<div class="a" style="left:607px;top:328px;width:57px;height:1px;background:#111;"></div>
<div class="a" style="left:684px;top:328px;width:573px;height:1px;background:#111;"></div>
<div class="a" style="left:26px;top:345px;width:488px;height:1px;background:#111;"></div>
<div class="a" style="left:535px;top:345px;width:52px;height:1px;background:#111;"></div>
<div class="a" style="left:607px;top:345px;width:57px;height:1px;background:#111;"></div>
<div class="a" style="left:684px;top:345px;width:573px;height:1px;background:#111;"></div>
<div class="a" style="left:26px;top:362px;width:488px;height:1px;background:#111;"></div>
<div class="a" style="left:535px;top:362px;width:52px;height:1px;background:#111;"></div>
<div class="a" style="left:607px;top:362px;width:57px;height:1px;background:#111;"></div>
<div class="a" style="left:684px;top:362px;width:573px;height:1px;background:#111;"></div>
<div class="a" style="left:26px;top:379px;width:488px;height:1px;background:#111;"></div>
<div class="a" style="left:535px;top:379px;width:52px;height:1px;background:#111;"></div>
<div class="a" style="left:607px;top:379px;width:57px;height:1px;background:#111;"></div>
<div class="a" style="left:684px;top:379px;width:573px;height:1px;background:#111;"></div>
<div class="a" style="left:26px;top:396px;width:488px;height:1px;background:#111;"></div>
<div class="a" style="left:535px;top:396px;width:52px;height:1px;background:#111;"></div>
<div class="a" style="left:607px;top:396px;width:57px;height:1px;background:#111;"></div>
<div class="a" style="left:684px;top:396px;width:573px;height:1px;background:#111;"></div>
<div class="a" style="left:26px;top:413px;width:488px;height:1px;background:#111;"></div>
<div class="a" style="left:535px;top:413px;width:52px;height:1px;background:#111;"></div>
<div class="a" style="left:607px;top:413px;width:57px;height:1px;background:#111;"></div>
<div class="a" style="left:684px;top:413px;width:573px;height:1px;background:#111;"></div>
<div class="a" style="left:26px;top:430px;width:488px;height:1px;background:#111;"></div>
<div class="a" style="left:535px;top:430px;width:52px;height:1px;background:#111;"></div>
<div class="a" style="left:607px;top:430px;width:57px;height:1px;background:#111;"></div>
<div class="a" style="left:684px;top:430px;width:573px;height:1px;background:#111;"></div>
<div class="a" style="left:26px;top:447px;width:488px;height:1px;background:#111;"></div>
<div class="a" style="left:535px;top:447px;width:52px;height:1px;background:#111;"></div>
<div class="a" style="left:607px;top:447px;width:57px;height:1px;background:#111;"></div>
<div class="a" style="left:684px;top:447px;width:573px;height:1px;background:#111;"></div>
<div class="a" style="left:26px;top:464px;width:488px;height:1px;background:#111;"></div>
<div class="a" style="left:535px;top:464px;width:52px;height:1px;background:#111;"></div>
<div class="a" style="left:607px;top:464px;width:57px;height:1px;background:#111;"></div>
<div class="a" style="left:684px;top:464px;width:573px;height:1px;background:#111;"></div>
<div class="a" style="left:26px;top:481px;width:488px;height:1px;background:#111;"></div>
<div class="a" style="left:535px;top:481px;width:52px;height:1px;background:#111;"></div>
<div class="a" style="left:607px;top:481px;width:57px;height:1px;background:#111;"></div>
<div class="a" style="left:684px;top:481px;width:573px;height:1px;background:#111;"></div>
<div class="a" style="left:26px;top:498px;width:488px;height:1px;background:#111;"></div>
<div class="a" style="left:535px;top:498px;width:52px;height:1px;background:#111;"></div>
<div class="a" style="left:607px;top:498px;width:57px;height:1px;background:#111;"></div>
<div class="a" style="left:684px;top:498px;width:573px;height:1px;background:#111;"></div>
<div class="a" style="left:26px;top:515px;width:488px;height:1px;background:#111;"></div>
<div class="a" style="left:535px;top:515px;width:52px;height:1px;background:#111;"></div>
<div class="a" style="left:607px;top:515px;width:57px;height:1px;background:#111;"></div>
<div class="a" style="left:684px;top:515px;width:573px;height:1px;background:#111;"></div>
<div class="a" style="left:26px;top:532px;width:488px;height:1px;background:#111;"></div>
<div class="a" style="left:535px;top:532px;width:52px;height:1px;background:#111;"></div>
<div class="a" style="left:607px;top:532px;width:57px;height:1px;background:#111;"></div>
<div class="a" style="left:684px;top:532px;width:573px;height:1px;background:#111;"></div>
<div class="a" style="left:26px;top:549px;width:488px;height:1px;background:#111;"></div>
<div class="a" style="left:535px;top:549px;width:52px;height:1px;background:#111;"></div>
<div class="a" style="left:607px;top:549px;width:57px;height:1px;background:#111;"></div>
<div class="a" style="left:684px;top:549px;width:573px;height:1px;background:#111;"></div>
<div class="a" style="left:26px;top:566px;width:488px;height:1px;background:#111;"></div>
<div class="a" style="left:535px;top:566px;width:52px;height:1px;background:#111;"></div>
<div class="a" style="left:607px;top:566px;width:57px;height:1px;background:#111;"></div>
<div class="a" style="left:684px;top:566px;width:573px;height:1px;background:#111;"></div>
<div class="a" style="left:26px;top:583px;width:488px;height:1px;background:#111;"></div>
<div class="a" style="left:535px;top:583px;width:52px;height:1px;background:#111;"></div>
<div class="a" style="left:607px;top:583px;width:57px;height:1px;background:#111;"></div>
<div class="a" style="left:684px;top:583px;width:573px;height:1px;background:#111;"></div>
<div class="a" style="left:26px;top:600px;width:488px;height:1px;background:#111;"></div>
<div class="a" style="left:535px;top:600px;width:52px;height:1px;background:#111;"></div>
<div class="a" style="left:607px;top:600px;width:57px;height:1px;background:#111;"></div>
<div class="a" style="left:684px;top:600px;width:573px;height:1px;background:#111;"></div>
<div class="a" style="left:26px;top:617px;width:488px;height:1px;background:#111;"></div>
<div class="a" style="left:535px;top:617px;width:52px;height:1px;background:#111;"></div>
<div class="a" style="left:607px;top:617px;width:57px;height:1px;background:#111;"></div>
<div class="a" style="left:684px;top:617px;width:573px;height:1px;background:#111;"></div>
<div class="a" style="left:26px;top:634px;width:488px;height:1px;background:#111;"></div>
<div class="a" style="left:535px;top:634px;width:52px;height:1px;background:#111;"></div>
<div class="a" style="left:607px;top:634px;width:57px;height:1px;background:#111;"></div>
<div class="a" style="left:684px;top:634px;width:573px;height:1px;background:#111;"></div>
<div class="a" style="left:26px;top:651px;width:488px;height:1px;background:#111;"></div>
<div class="a" style="left:535px;top:651px;width:52px;height:1px;background:#111;"></div>
<div class="a" style="left:607px;top:651px;width:57px;height:1px;background:#111;"></div>
<div class="a" style="left:684px;top:651px;width:573px;height:1px;background:#111;"></div>
<div class="a" style="left:26px;top:668px;width:488px;height:1px;background:#111;"></div>
<div class="a" style="left:535px;top:668px;width:52px;height:1px;background:#111;"></div>
<div class="a" style="left:607px;top:668px;width:57px;height:1px;background:#111;"></div>
<div class="a" style="left:684px;top:668px;width:573px;height:1px;background:#111;"></div>
<div class="t" style="left:147px;width:600px;text-align:center;top:229px;font-size:12px;color:#1a1d26;font-weight:bold;transform:scaleX(0.91);">Jahresübersicht</div>
<div class="t" style="left:147px;width:600px;text-align:center;top:245px;font-size:12px;color:#1a1d26;font-weight:bold;">2017</div>
<div class="t" style="left:698px;width:600px;text-align:center;top:229px;font-size:12px;color:#1a1d26;font-weight:bold;transform:scaleX(0.94);">Monatsübersicht</div>
<div class="t" style="left:698px;width:600px;text-align:center;top:245px;font-size:12px;color:#1a1d26;font-weight:bold;">2017</div>
<div class="t" style="left:128.0px;width:600px;text-align:center;top:263px;font-size:12px;color:#dce8f5;font-weight:bold;transform:scaleX(0.93);">Summe</div>
<div class="t" style="left:196.0px;width:600px;text-align:center;top:263px;font-size:12px;color:#dce8f5;font-weight:bold;">%</div>
<div class="t" style="left:261.0px;width:600px;text-align:center;top:263px;font-size:12px;color:#dce8f5;font-weight:normal;">SOLL</div>
<div class="t" style="left:335.5px;width:600px;text-align:center;top:263px;font-size:12px;color:#dce8f5;font-weight:normal;">Abweich.</div>
<div class="t" style="left:410.0px;width:600px;text-align:center;top:263px;font-size:12px;color:#c5d9f1;font-weight:normal;">1</div>
<div class="t" style="left:461.0px;width:600px;text-align:center;top:263px;font-size:12px;color:#c5d9f1;font-weight:normal;">2</div>
<div class="t" style="left:512.0px;width:600px;text-align:center;top:263px;font-size:12px;color:#c5d9f1;font-weight:normal;">3</div>
<div class="t" style="left:563.0px;width:600px;text-align:center;top:263px;font-size:12px;color:#c5d9f1;font-weight:normal;">4</div>
<div class="t" style="left:614.0px;width:600px;text-align:center;top:263px;font-size:12px;color:#c5d9f1;font-weight:normal;">5</div>
<div class="t" style="left:665.0px;width:600px;text-align:center;top:263px;font-size:12px;color:#c5d9f1;font-weight:normal;">6</div>
<div class="t" style="left:716.0px;width:600px;text-align:center;top:263px;font-size:12px;color:#c5d9f1;font-weight:normal;">7</div>
<div class="t" style="left:767.0px;width:600px;text-align:center;top:263px;font-size:12px;color:#c5d9f1;font-weight:normal;">8</div>
<div class="t" style="left:818.0px;width:600px;text-align:center;top:263px;font-size:12px;color:#c5d9f1;font-weight:normal;">9</div>
<div class="t" style="left:869.0px;width:600px;text-align:center;top:263px;font-size:12px;color:#c5d9f1;font-weight:normal;">10</div>
<div class="t" style="left:920.0px;width:600px;text-align:center;top:263px;font-size:12px;color:#c5d9f1;font-weight:normal;">11</div>
<div class="t" style="left:28.3px;top:280px;font-size:12px;color:#1a1a1a;font-weight:normal;letter-spacing:0.057px;">Beratung</div>
<div class="t" style="left:75px;width:400px;text-align:right;top:280px;font-size:12px;color:#1a1a1a;font-weight:normal;">16.760</div>
<div class="t" style="left:112px;width:400px;text-align:right;top:280px;font-size:12px;color:#1a1a1a;font-weight:normal;">31%</div>
<div class="t" style="left:184px;width:400px;text-align:right;top:280px;font-size:12px;color:#1a1a1a;font-weight:normal;">10.000</div>
<div class="t" style="left:260.5px;width:400px;text-align:right;top:280px;font-size:12px;color:#1a1a1a;font-weight:normal;">6.760</div>
<div class="t" style="left:333px;width:400px;text-align:right;top:280px;font-size:12px;color:#1a1a1a;font-weight:normal;">4.000</div>
<div class="t" style="left:384px;width:400px;text-align:right;top:280px;font-size:12px;color:#1a1a1a;font-weight:normal;">5.000</div>
<div class="t" style="left:435px;width:400px;text-align:right;top:280px;font-size:12px;color:#1a1a1a;font-weight:normal;">0</div>
<div class="t" style="left:486px;width:400px;text-align:right;top:280px;font-size:12px;color:#1a1a1a;font-weight:normal;">0</div>
<div class="t" style="left:537px;width:400px;text-align:right;top:280px;font-size:12px;color:#1a1a1a;font-weight:normal;">7.760</div>
<div class="t" style="left:588px;width:400px;text-align:right;top:280px;font-size:12px;color:#1a1a1a;font-weight:normal;">0</div>
<div class="t" style="left:639px;width:400px;text-align:right;top:280px;font-size:12px;color:#1a1a1a;font-weight:normal;">0</div>
<div class="t" style="left:690px;width:400px;text-align:right;top:280px;font-size:12px;color:#1a1a1a;font-weight:normal;">0</div>
<div class="t" style="left:741px;width:400px;text-align:right;top:280px;font-size:12px;color:#1a1a1a;font-weight:normal;">0</div>
<div class="t" style="left:792px;width:400px;text-align:right;top:280px;font-size:12px;color:#1a1a1a;font-weight:normal;">0</div>
<div class="t" style="left:843px;width:400px;text-align:right;top:280px;font-size:12px;color:#1a1a1a;font-weight:normal;">0</div>
<div class="t" style="left:28.3px;top:297px;font-size:12px;color:#1a1a1a;font-weight:normal;letter-spacing:0.025px;">Projektmanagement</div>
<div class="t" style="left:75px;width:400px;text-align:right;top:297px;font-size:12px;color:#1a1a1a;font-weight:normal;">20.000</div>
<div class="t" style="left:112px;width:400px;text-align:right;top:297px;font-size:12px;color:#1a1a1a;font-weight:normal;">37%</div>
<div class="t" style="left:184px;width:400px;text-align:right;top:297px;font-size:12px;color:#1a1a1a;font-weight:normal;">30.000</div>
<div class="t" style="left:260.5px;width:400px;text-align:right;top:297px;font-size:12px;color:#1a1a1a;font-weight:normal;">-10.000</div>
<div class="t" style="left:333px;width:400px;text-align:right;top:297px;font-size:12px;color:#1a1a1a;font-weight:normal;">0</div>
<div class="t" style="left:384px;width:400px;text-align:right;top:297px;font-size:12px;color:#1a1a1a;font-weight:normal;">0</div>
<div class="t" style="left:435px;width:400px;text-align:right;top:297px;font-size:12px;color:#1a1a1a;font-weight:normal;">0</div>
<div class="t" style="left:486px;width:400px;text-align:right;top:297px;font-size:12px;color:#1a1a1a;font-weight:normal;">10.000</div>
<div class="t" style="left:537px;width:400px;text-align:right;top:297px;font-size:12px;color:#1a1a1a;font-weight:normal;">0</div>
<div class="t" style="left:588px;width:400px;text-align:right;top:297px;font-size:12px;color:#1a1a1a;font-weight:normal;">0</div>
<div class="t" style="left:639px;width:400px;text-align:right;top:297px;font-size:12px;color:#1a1a1a;font-weight:normal;">10.000</div>
<div class="t" style="left:690px;width:400px;text-align:right;top:297px;font-size:12px;color:#1a1a1a;font-weight:normal;">0</div>
<div class="t" style="left:741px;width:400px;text-align:right;top:297px;font-size:12px;color:#1a1a1a;font-weight:normal;">0</div>
<div class="t" style="left:792px;width:400px;text-align:right;top:297px;font-size:12px;color:#1a1a1a;font-weight:normal;">0</div>
<div class="t" style="left:843px;width:400px;text-align:right;top:297px;font-size:12px;color:#1a1a1a;font-weight:normal;">0</div>
<div class="t" style="left:28.3px;top:314px;font-size:12px;color:#1a1a1a;font-weight:normal;letter-spacing:0.043px;">Schulung</div>
<div class="t" style="left:75px;width:400px;text-align:right;top:314px;font-size:12px;color:#1a1a1a;font-weight:normal;">0</div>
<div class="t" style="left:112px;width:400px;text-align:right;top:314px;font-size:12px;color:#1a1a1a;font-weight:normal;">0%</div>
<div class="t" style="left:260.5px;width:400px;text-align:right;top:314px;font-size:12px;color:#1a1a1a;font-weight:normal;">0</div>
<div class="t" style="left:333px;width:400px;text-align:right;top:314px;font-size:12px;color:#1a1a1a;font-weight:normal;">0</div>
<div class="t" style="left:384px;width:400px;text-align:right;top:314px;font-size:12px;color:#1a1a1a;font-weight:normal;">0</div>
<div class="t" style="left:435px;width:400px;text-align:right;top:314px;font-size:12px;color:#1a1a1a;font-weight:normal;">0</div>
<div class="t" style="left:486px;width:400px;text-align:right;top:314px;font-size:12px;color:#1a1a1a;font-weight:normal;">0</div>
<div class="t" style="left:537px;width:400px;text-align:right;top:314px;font-size:12px;color:#1a1a1a;font-weight:normal;">0</div>
<div class="t" style="left:588px;width:400px;text-align:right;top:314px;font-size:12px;color:#1a1a1a;font-weight:normal;">0</div>
<div class="t" style="left:639px;width:400px;text-align:right;top:314px;font-size:12px;color:#1a1a1a;font-weight:normal;">0</div>
<div class="t" style="left:690px;width:400px;text-align:right;top:314px;font-size:12px;color:#1a1a1a;font-weight:normal;">0</div>
<div class="t" style="left:741px;width:400px;text-align:right;top:314px;font-size:12px;color:#1a1a1a;font-weight:normal;">0</div>
<div class="t" style="left:792px;width:400px;text-align:right;top:314px;font-size:12px;color:#1a1a1a;font-weight:normal;">0</div>
<div class="t" style="left:843px;width:400px;text-align:right;top:314px;font-size:12px;color:#1a1a1a;font-weight:normal;">0</div>
<div class="t" style="left:28.3px;top:331px;font-size:12px;color:#1a1a1a;font-weight:normal;letter-spacing:0.057px;">sonstige</div>
<div class="t" style="left:75px;width:400px;text-align:right;top:331px;font-size:12px;color:#1a1a1a;font-weight:normal;">15.000</div>
<div class="t" style="left:112px;width:400px;text-align:right;top:331px;font-size:12px;color:#1a1a1a;font-weight:normal;">27%</div>
<div class="t" style="left:260.5px;width:400px;text-align:right;top:331px;font-size:12px;color:#1a1a1a;font-weight:normal;">15.000</div>
<div class="t" style="left:333px;width:400px;text-align:right;top:331px;font-size:12px;color:#1a1a1a;font-weight:normal;">0</div>
<div class="t" style="left:384px;width:400px;text-align:right;top:331px;font-size:12px;color:#1a1a1a;font-weight:normal;">0</div>
<div class="t" style="left:435px;width:400px;text-align:right;top:331px;font-size:12px;color:#1a1a1a;font-weight:normal;">0</div>
<div class="t" style="left:486px;width:400px;text-align:right;top:331px;font-size:12px;color:#1a1a1a;font-weight:normal;">0</div>
<div class="t" style="left:537px;width:400px;text-align:right;top:331px;font-size:12px;color:#1a1a1a;font-weight:normal;">0</div>
<div class="t" style="left:588px;width:400px;text-align:right;top:331px;font-size:12px;color:#1a1a1a;font-weight:normal;">0</div>
<div class="t" style="left:639px;width:400px;text-align:right;top:331px;font-size:12px;color:#1a1a1a;font-weight:normal;">0</div>
<div class="t" style="left:690px;width:400px;text-align:right;top:331px;font-size:12px;color:#1a1a1a;font-weight:normal;">0</div>
<div class="t" style="left:741px;width:400px;text-align:right;top:331px;font-size:12px;color:#1a1a1a;font-weight:normal;">15.000</div>
<div class="t" style="left:792px;width:400px;text-align:right;top:331px;font-size:12px;color:#1a1a1a;font-weight:normal;">0</div>
<div class="t" style="left:843px;width:400px;text-align:right;top:331px;font-size:12px;color:#1a1a1a;font-weight:normal;">0</div>
<div class="t" style="left:28.3px;top:348px;font-size:12px;color:#1a1a1a;font-weight:normal;letter-spacing:-0.017px;">Private Kfz-Nutzung</div>
<div class="t" style="left:75px;width:400px;text-align:right;top:348px;font-size:12px;color:#1a1a1a;font-weight:normal;">2.850</div>
<div class="t" style="left:112px;width:400px;text-align:right;top:348px;font-size:12px;color:#1a1a1a;font-weight:normal;">5%</div>
<div class="t" style="left:260.5px;width:400px;text-align:right;top:348px;font-size:12px;color:#1a1a1a;font-weight:normal;">2.850</div>
<div class="t" style="left:28.3px;top:365px;font-size:12px;color:#1a1a1a;font-weight:normal;letter-spacing:-0.027px;">Sonstige Leistungsentnahmen</div>
<div class="t" style="left:75px;width:400px;text-align:right;top:365px;font-size:12px;color:#1a1a1a;font-weight:normal;">130</div>
<div class="t" style="left:112px;width:400px;text-align:right;top:365px;font-size:12px;color:#1a1a1a;font-weight:normal;">0%</div>
<div class="t" style="left:260.5px;width:400px;text-align:right;top:365px;font-size:12px;color:#1a1a1a;font-weight:normal;">130</div>
<div class="t" style="left:333px;width:400px;text-align:right;top:365px;font-size:12px;color:#1a1a1a;font-weight:normal;">0</div>
<div class="t" style="left:384px;width:400px;text-align:right;top:365px;font-size:12px;color:#1a1a1a;font-weight:normal;">0</div>
<div class="t" style="left:435px;width:400px;text-align:right;top:365px;font-size:12px;color:#1a1a1a;font-weight:normal;">0</div>
<div class="t" style="left:486px;width:400px;text-align:right;top:365px;font-size:12px;color:#1a1a1a;font-weight:normal;">0</div>
<div class="t" style="left:537px;width:400px;text-align:right;top:365px;font-size:12px;color:#1a1a1a;font-weight:normal;">0</div>
<div class="t" style="left:588px;width:400px;text-align:right;top:365px;font-size:12px;color:#1a1a1a;font-weight:normal;">0</div>
<div class="t" style="left:639px;width:400px;text-align:right;top:365px;font-size:12px;color:#1a1a1a;font-weight:normal;">0</div>
<div class="t" style="left:690px;width:400px;text-align:right;top:365px;font-size:12px;color:#1a1a1a;font-weight:normal;">0</div>
<div class="t" style="left:741px;width:400px;text-align:right;top:365px;font-size:12px;color:#1a1a1a;font-weight:normal;">0</div>
<div class="t" style="left:792px;width:400px;text-align:right;top:365px;font-size:12px;color:#1a1a1a;font-weight:normal;">0</div>
<div class="t" style="left:843px;width:400px;text-align:right;top:365px;font-size:12px;color:#1a1a1a;font-weight:normal;">100</div>
<div class="t" style="left:28.3px;top:382px;font-size:12px;color:#1a1a1a;font-weight:normal;letter-spacing:0.144px;">Betriebseinnahmen</div>
<div class="t" style="left:72px;width:400px;text-align:right;top:382px;font-size:12px;color:#1a1a1a;font-weight:normal;">54.740</div>
<div class="t" style="left:112px;width:400px;text-align:right;top:382px;font-size:12px;color:#1a1a1a;font-weight:normal;">100%</div>
<div class="t" style="left:260.5px;width:400px;text-align:right;top:382px;font-size:12px;color:#1a1a1a;font-weight:normal;">54.740</div>
<div class="t" style="left:330px;width:400px;text-align:right;top:382px;font-size:12px;color:#1a1a1a;font-weight:normal;">4.000</div>
<div class="t" style="left:381px;width:400px;text-align:right;top:382px;font-size:12px;color:#1a1a1a;font-weight:normal;">5.000</div>
<div class="t" style="left:432px;width:400px;text-align:right;top:382px;font-size:12px;color:#1a1a1a;font-weight:normal;">0</div>
<div class="t" style="left:483px;width:400px;text-align:right;top:382px;font-size:12px;color:#1a1a1a;font-weight:normal;">10.000</div>
<div class="t" style="left:534px;width:400px;text-align:right;top:382px;font-size:12px;color:#1a1a1a;font-weight:normal;">7.760</div>
<div class="t" style="left:585px;width:400px;text-align:right;top:382px;font-size:12px;color:#1a1a1a;font-weight:normal;">0</div>
<div class="t" style="left:636px;width:400px;text-align:right;top:382px;font-size:12px;color:#1a1a1a;font-weight:normal;">10.000</div>
<div class="t" style="left:687px;width:400px;text-align:right;top:382px;font-size:12px;color:#1a1a1a;font-weight:normal;">0</div>
<div class="t" style="left:738px;width:400px;text-align:right;top:382px;font-size:12px;color:#1a1a1a;font-weight:normal;">15.000</div>
<div class="t" style="left:789px;width:400px;text-align:right;top:382px;font-size:12px;color:#1a1a1a;font-weight:normal;">0</div>
<div class="t" style="left:840px;width:400px;text-align:right;top:382px;font-size:12px;color:#1a1a1a;font-weight:normal;">100</div>
<div class="t" style="left:28.3px;top:399px;font-size:12px;color:#1a1a1a;font-weight:normal;letter-spacing:0.179px;">Waren, Rohstoffe, Hilfsstoffe</div>
<div class="t" style="left:75px;width:400px;text-align:right;top:399px;font-size:12px;color:#1a1a1a;font-weight:normal;">500</div>
<div class="t" style="left:112px;width:400px;text-align:right;top:399px;font-size:12px;color:#1a1a1a;font-weight:normal;">1%</div>
<div class="t" style="left:260.5px;width:400px;text-align:right;top:399px;font-size:12px;color:#1a1a1a;font-weight:normal;">500</div>
<div class="t" style="left:333px;width:400px;text-align:right;top:399px;font-size:12px;color:#1a1a1a;font-weight:normal;">0</div>
<div class="t" style="left:384px;width:400px;text-align:right;top:399px;font-size:12px;color:#1a1a1a;font-weight:normal;">0</div>
<div class="t" style="left:435px;width:400px;text-align:right;top:399px;font-size:12px;color:#1a1a1a;font-weight:normal;">0</div>
<div class="t" style="left:486px;width:400px;text-align:right;top:399px;font-size:12px;color:#1a1a1a;font-weight:normal;">0</div>
<div class="t" style="left:537px;width:400px;text-align:right;top:399px;font-size:12px;color:#1a1a1a;font-weight:normal;">0</div>
<div class="t" style="left:588px;width:400px;text-align:right;top:399px;font-size:12px;color:#1a1a1a;font-weight:normal;">0</div>
<div class="t" style="left:639px;width:400px;text-align:right;top:399px;font-size:12px;color:#1a1a1a;font-weight:normal;">0</div>
<div class="t" style="left:690px;width:400px;text-align:right;top:399px;font-size:12px;color:#1a1a1a;font-weight:normal;">0</div>
<div class="t" style="left:741px;width:400px;text-align:right;top:399px;font-size:12px;color:#1a1a1a;font-weight:normal;">0</div>
<div class="t" style="left:792px;width:400px;text-align:right;top:399px;font-size:12px;color:#1a1a1a;font-weight:normal;">0</div>
<div class="t" style="left:843px;width:400px;text-align:right;top:399px;font-size:12px;color:#1a1a1a;font-weight:normal;">500</div>
<div class="t" style="left:28.3px;top:416px;font-size:12px;color:#1a1a1a;font-weight:normal;letter-spacing:0.093px;">Fremdleistungen</div>
<div class="t" style="left:75px;width:400px;text-align:right;top:416px;font-size:12px;color:#1a1a1a;font-weight:normal;">6.000</div>
<div class="t" style="left:112px;width:400px;text-align:right;top:416px;font-size:12px;color:#1a1a1a;font-weight:normal;">11%</div>
<div class="t" style="left:260.5px;width:400px;text-align:right;top:416px;font-size:12px;color:#1a1a1a;font-weight:normal;">6.000</div>
<div class="t" style="left:333px;width:400px;text-align:right;top:416px;font-size:12px;color:#1a1a1a;font-weight:normal;">0</div>
<div class="t" style="left:384px;width:400px;text-align:right;top:416px;font-size:12px;color:#1a1a1a;font-weight:normal;">6.000</div>
<div class="t" style="left:435px;width:400px;text-align:right;top:416px;font-size:12px;color:#1a1a1a;font-weight:normal;">0</div>
<div class="t" style="left:486px;width:400px;text-align:right;top:416px;font-size:12px;color:#1a1a1a;font-weight:normal;">0</div>
<div class="t" style="left:537px;width:400px;text-align:right;top:416px;font-size:12px;color:#1a1a1a;font-weight:normal;">0</div>
<div class="t" style="left:588px;width:400px;text-align:right;top:416px;font-size:12px;color:#1a1a1a;font-weight:normal;">0</div>
<div class="t" style="left:639px;width:400px;text-align:right;top:416px;font-size:12px;color:#1a1a1a;font-weight:normal;">0</div>
<div class="t" style="left:690px;width:400px;text-align:right;top:416px;font-size:12px;color:#1a1a1a;font-weight:normal;">0</div>
<div class="t" style="left:741px;width:400px;text-align:right;top:416px;font-size:12px;color:#1a1a1a;font-weight:normal;">0</div>
<div class="t" style="left:792px;width:400px;text-align:right;top:416px;font-size:12px;color:#1a1a1a;font-weight:normal;">0</div>
<div class="t" style="left:843px;width:400px;text-align:right;top:416px;font-size:12px;color:#1a1a1a;font-weight:normal;">0</div>
<div class="t" style="left:28.3px;top:433px;font-size:12px;color:#1a1a1a;font-weight:normal;letter-spacing:0.146px;">Personalkosten</div>
<div class="t" style="left:75px;width:400px;text-align:right;top:433px;font-size:12px;color:#1a1a1a;font-weight:normal;">1.000</div>
<div class="t" style="left:112px;width:400px;text-align:right;top:433px;font-size:12px;color:#1a1a1a;font-weight:normal;">2%</div>
<div class="t" style="left:260.5px;width:400px;text-align:right;top:433px;font-size:12px;color:#1a1a1a;font-weight:normal;">1.000</div>
<div class="t" style="left:333px;width:400px;text-align:right;top:433px;font-size:12px;color:#1a1a1a;font-weight:normal;">0</div>
<div class="t" style="left:384px;width:400px;text-align:right;top:433px;font-size:12px;color:#1a1a1a;font-weight:normal;">0</div>
<div class="t" style="left:435px;width:400px;text-align:right;top:433px;font-size:12px;color:#1a1a1a;font-weight:normal;">0</div>
<div class="t" style="left:486px;width:400px;text-align:right;top:433px;font-size:12px;color:#1a1a1a;font-weight:normal;">0</div>
<div class="t" style="left:537px;width:400px;text-align:right;top:433px;font-size:12px;color:#1a1a1a;font-weight:normal;">0</div>
<div class="t" style="left:588px;width:400px;text-align:right;top:433px;font-size:12px;color:#1a1a1a;font-weight:normal;">0</div>
<div class="t" style="left:639px;width:400px;text-align:right;top:433px;font-size:12px;color:#1a1a1a;font-weight:normal;">0</div>
<div class="t" style="left:690px;width:400px;text-align:right;top:433px;font-size:12px;color:#1a1a1a;font-weight:normal;">0</div>
<div class="t" style="left:741px;width:400px;text-align:right;top:433px;font-size:12px;color:#1a1a1a;font-weight:normal;">0</div>
<div class="t" style="left:792px;width:400px;text-align:right;top:433px;font-size:12px;color:#1a1a1a;font-weight:normal;">0</div>
<div class="t" style="left:843px;width:400px;text-align:right;top:433px;font-size:12px;color:#1a1a1a;font-weight:normal;">0</div>
<div class="t" style="left:28.3px;top:450px;font-size:12px;color:#1a1a1a;font-weight:normal;letter-spacing:0.114px;">Geringwertige Wirtschaftsgüter (GWG)</div>
<div class="t" style="left:75px;width:400px;text-align:right;top:450px;font-size:12px;color:#1a1a1a;font-weight:normal;">400</div>
<div class="t" style="left:112px;width:400px;text-align:right;top:450px;font-size:12px;color:#1a1a1a;font-weight:normal;">1%</div>
<div class="t" style="left:260.5px;width:400px;text-align:right;top:450px;font-size:12px;color:#1a1a1a;font-weight:normal;">400</div>
<div class="t" style="left:333px;width:400px;text-align:right;top:450px;font-size:12px;color:#1a1a1a;font-weight:normal;">0</div>
<div class="t" style="left:384px;width:400px;text-align:right;top:450px;font-size:12px;color:#1a1a1a;font-weight:normal;">0</div>
<div class="t" style="left:435px;width:400px;text-align:right;top:450px;font-size:12px;color:#1a1a1a;font-weight:normal;">0</div>
<div class="t" style="left:486px;width:400px;text-align:right;top:450px;font-size:12px;color:#1a1a1a;font-weight:normal;">0</div>
<div class="t" style="left:537px;width:400px;text-align:right;top:450px;font-size:12px;color:#1a1a1a;font-weight:normal;">0</div>
<div class="t" style="left:588px;width:400px;text-align:right;top:450px;font-size:12px;color:#1a1a1a;font-weight:normal;">0</div>
<div class="t" style="left:639px;width:400px;text-align:right;top:450px;font-size:12px;color:#1a1a1a;font-weight:normal;">0</div>
<div class="t" style="left:690px;width:400px;text-align:right;top:450px;font-size:12px;color:#1a1a1a;font-weight:normal;">400</div>
<div class="t" style="left:741px;width:400px;text-align:right;top:450px;font-size:12px;color:#1a1a1a;font-weight:normal;">0</div>
<div class="t" style="left:792px;width:400px;text-align:right;top:450px;font-size:12px;color:#1a1a1a;font-weight:normal;">0</div>
<div class="t" style="left:843px;width:400px;text-align:right;top:450px;font-size:12px;color:#1a1a1a;font-weight:normal;">0</div>
<div class="t" style="left:28.3px;top:467px;font-size:12px;color:#1a1a1a;font-weight:normal;letter-spacing:-0.089px;">Raumkosten</div>
<div class="t" style="left:75px;width:400px;text-align:right;top:467px;font-size:12px;color:#1a1a1a;font-weight:normal;">500</div>
<div class="t" style="left:112px;width:400px;text-align:right;top:467px;font-size:12px;color:#1a1a1a;font-weight:normal;">1%</div>
<div class="t" style="left:260.5px;width:400px;text-align:right;top:467px;font-size:12px;color:#1a1a1a;font-weight:normal;">500</div>
<div class="t" style="left:333px;width:400px;text-align:right;top:467px;font-size:12px;color:#1a1a1a;font-weight:normal;">0</div>
<div class="t" style="left:384px;width:400px;text-align:right;top:467px;font-size:12px;color:#1a1a1a;font-weight:normal;">0</div>
<div class="t" style="left:435px;width:400px;text-align:right;top:467px;font-size:12px;color:#1a1a1a;font-weight:normal;">0</div>
<div class="t" style="left:486px;width:400px;text-align:right;top:467px;font-size:12px;color:#1a1a1a;font-weight:normal;">0</div>
<div class="t" style="left:537px;width:400px;text-align:right;top:467px;font-size:12px;color:#1a1a1a;font-weight:normal;">0</div>
<div class="t" style="left:588px;width:400px;text-align:right;top:467px;font-size:12px;color:#1a1a1a;font-weight:normal;">0</div>
<div class="t" style="left:639px;width:400px;text-align:right;top:467px;font-size:12px;color:#1a1a1a;font-weight:normal;">0</div>
<div class="t" style="left:690px;width:400px;text-align:right;top:467px;font-size:12px;color:#1a1a1a;font-weight:normal;">0</div>
<div class="t" style="left:741px;width:400px;text-align:right;top:467px;font-size:12px;color:#1a1a1a;font-weight:normal;">0</div>
<div class="t" style="left:792px;width:400px;text-align:right;top:467px;font-size:12px;color:#1a1a1a;font-weight:normal;">0</div>
<div class="t" style="left:843px;width:400px;text-align:right;top:467px;font-size:12px;color:#1a1a1a;font-weight:normal;">0</div>
<div class="t" style="left:28.3px;top:484px;font-size:12px;color:#1a1a1a;font-weight:normal;letter-spacing:0.154px;">Telekommunikationskosten - Festnetz / Internetanschluss</div>
<div class="t" style="left:75px;width:400px;text-align:right;top:484px;font-size:12px;color:#1a1a1a;font-weight:normal;">50</div>
<div class="t" style="left:112px;width:400px;text-align:right;top:484px;font-size:12px;color:#1a1a1a;font-weight:normal;">0%</div>
<div class="t" style="left:260.5px;width:400px;text-align:right;top:484px;font-size:12px;color:#1a1a1a;font-weight:normal;">50</div>
<div class="t" style="left:333px;width:400px;text-align:right;top:484px;font-size:12px;color:#1a1a1a;font-weight:normal;">0</div>
<div class="t" style="left:384px;width:400px;text-align:right;top:484px;font-size:12px;color:#1a1a1a;font-weight:normal;">0</div>
<div class="t" style="left:435px;width:400px;text-align:right;top:484px;font-size:12px;color:#1a1a1a;font-weight:normal;">0</div>
<div class="t" style="left:486px;width:400px;text-align:right;top:484px;font-size:12px;color:#1a1a1a;font-weight:normal;">50</div>
<div class="t" style="left:537px;width:400px;text-align:right;top:484px;font-size:12px;color:#1a1a1a;font-weight:normal;">0</div>
<div class="t" style="left:588px;width:400px;text-align:right;top:484px;font-size:12px;color:#1a1a1a;font-weight:normal;">0</div>
<div class="t" style="left:639px;width:400px;text-align:right;top:484px;font-size:12px;color:#1a1a1a;font-weight:normal;">0</div>
<div class="t" style="left:690px;width:400px;text-align:right;top:484px;font-size:12px;color:#1a1a1a;font-weight:normal;">0</div>
<div class="t" style="left:741px;width:400px;text-align:right;top:484px;font-size:12px;color:#1a1a1a;font-weight:normal;">0</div>
<div class="t" style="left:792px;width:400px;text-align:right;top:484px;font-size:12px;color:#1a1a1a;font-weight:normal;">0</div>
<div class="t" style="left:843px;width:400px;text-align:right;top:484px;font-size:12px;color:#1a1a1a;font-weight:normal;">0</div>
<div class="t" style="left:28.3px;top:501px;font-size:12px;color:#1a1a1a;font-weight:normal;letter-spacing:0.307px;">Telekommunikationskosten - Mobilfunkvertrag</div>
<div class="t" style="left:75px;width:400px;text-align:right;top:501px;font-size:12px;color:#1a1a1a;font-weight:normal;">100</div>
<div class="t" style="left:112px;width:400px;text-align:right;top:501px;font-size:12px;color:#1a1a1a;font-weight:normal;">0%</div>
<div class="t" style="left:260.5px;width:400px;text-align:right;top:501px;font-size:12px;color:#1a1a1a;font-weight:normal;">100</div>
<div class="t" style="left:333px;width:400px;text-align:right;top:501px;font-size:12px;color:#1a1a1a;font-weight:normal;">0</div>
<div class="t" style="left:384px;width:400px;text-align:right;top:501px;font-size:12px;color:#1a1a1a;font-weight:normal;">0</div>
<div class="t" style="left:435px;width:400px;text-align:right;top:501px;font-size:12px;color:#1a1a1a;font-weight:normal;">0</div>
<div class="t" style="left:486px;width:400px;text-align:right;top:501px;font-size:12px;color:#1a1a1a;font-weight:normal;">100</div>
<div class="t" style="left:537px;width:400px;text-align:right;top:501px;font-size:12px;color:#1a1a1a;font-weight:normal;">0</div>
<div class="t" style="left:588px;width:400px;text-align:right;top:501px;font-size:12px;color:#1a1a1a;font-weight:normal;">0</div>
<div class="t" style="left:639px;width:400px;text-align:right;top:501px;font-size:12px;color:#1a1a1a;font-weight:normal;">0</div>
<div class="t" style="left:690px;width:400px;text-align:right;top:501px;font-size:12px;color:#1a1a1a;font-weight:normal;">0</div>
<div class="t" style="left:741px;width:400px;text-align:right;top:501px;font-size:12px;color:#1a1a1a;font-weight:normal;">0</div>
<div class="t" style="left:792px;width:400px;text-align:right;top:501px;font-size:12px;color:#1a1a1a;font-weight:normal;">0</div>
<div class="t" style="left:843px;width:400px;text-align:right;top:501px;font-size:12px;color:#1a1a1a;font-weight:normal;">0</div>
<div class="t" style="left:28.3px;top:518px;font-size:12px;color:#1a1a1a;font-weight:normal;letter-spacing:0.033px;">Übernachtungs- und Reisenebenkosten bei Geschäftsreisen</div>
<div class="t" style="left:75px;width:400px;text-align:right;top:518px;font-size:12px;color:#1a1a1a;font-weight:normal;">200</div>
<div class="t" style="left:112px;width:400px;text-align:right;top:518px;font-size:12px;color:#1a1a1a;font-weight:normal;">0%</div>
<div class="t" style="left:260.5px;width:400px;text-align:right;top:518px;font-size:12px;color:#1a1a1a;font-weight:normal;">200</div>
<div class="t" style="left:333px;width:400px;text-align:right;top:518px;font-size:12px;color:#1a1a1a;font-weight:normal;">0</div>
<div class="t" style="left:384px;width:400px;text-align:right;top:518px;font-size:12px;color:#1a1a1a;font-weight:normal;">0</div>
<div class="t" style="left:435px;width:400px;text-align:right;top:518px;font-size:12px;color:#1a1a1a;font-weight:normal;">200</div>
<div class="t" style="left:486px;width:400px;text-align:right;top:518px;font-size:12px;color:#1a1a1a;font-weight:normal;">0</div>
<div class="t" style="left:537px;width:400px;text-align:right;top:518px;font-size:12px;color:#1a1a1a;font-weight:normal;">0</div>
<div class="t" style="left:588px;width:400px;text-align:right;top:518px;font-size:12px;color:#1a1a1a;font-weight:normal;">0</div>
<div class="t" style="left:639px;width:400px;text-align:right;top:518px;font-size:12px;color:#1a1a1a;font-weight:normal;">0</div>
<div class="t" style="left:690px;width:400px;text-align:right;top:518px;font-size:12px;color:#1a1a1a;font-weight:normal;">0</div>
<div class="t" style="left:741px;width:400px;text-align:right;top:518px;font-size:12px;color:#1a1a1a;font-weight:normal;">0</div>
<div class="t" style="left:792px;width:400px;text-align:right;top:518px;font-size:12px;color:#1a1a1a;font-weight:normal;">0</div>
<div class="t" style="left:843px;width:400px;text-align:right;top:518px;font-size:12px;color:#1a1a1a;font-weight:normal;">0</div>
<div class="t" style="left:28.3px;top:535px;font-size:12px;color:#1a1a1a;font-weight:normal;letter-spacing:0.064px;">Fortbildungskosten (ohne Reisekosten)</div>
<div class="t" style="left:75px;width:400px;text-align:right;top:535px;font-size:12px;color:#1a1a1a;font-weight:normal;">300</div>
<div class="t" style="left:112px;width:400px;text-align:right;top:535px;font-size:12px;color:#1a1a1a;font-weight:normal;">1%</div>
<div class="t" style="left:260.5px;width:400px;text-align:right;top:535px;font-size:12px;color:#1a1a1a;font-weight:normal;">300</div>
<div class="t" style="left:333px;width:400px;text-align:right;top:535px;font-size:12px;color:#1a1a1a;font-weight:normal;">0</div>
<div class="t" style="left:384px;width:400px;text-align:right;top:535px;font-size:12px;color:#1a1a1a;font-weight:normal;">0</div>
<div class="t" style="left:435px;width:400px;text-align:right;top:535px;font-size:12px;color:#1a1a1a;font-weight:normal;">0</div>
<div class="t" style="left:486px;width:400px;text-align:right;top:535px;font-size:12px;color:#1a1a1a;font-weight:normal;">0</div>
<div class="t" style="left:537px;width:400px;text-align:right;top:535px;font-size:12px;color:#1a1a1a;font-weight:normal;">0</div>
<div class="t" style="left:588px;width:400px;text-align:right;top:535px;font-size:12px;color:#1a1a1a;font-weight:normal;">0</div>
<div class="t" style="left:639px;width:400px;text-align:right;top:535px;font-size:12px;color:#1a1a1a;font-weight:normal;">0</div>
<div class="t" style="left:690px;width:400px;text-align:right;top:535px;font-size:12px;color:#1a1a1a;font-weight:normal;">0</div>
<div class="t" style="left:741px;width:400px;text-align:right;top:535px;font-size:12px;color:#1a1a1a;font-weight:normal;">0</div>
<div class="t" style="left:792px;width:400px;text-align:right;top:535px;font-size:12px;color:#1a1a1a;font-weight:normal;">300</div>
<div class="t" style="left:843px;width:400px;text-align:right;top:535px;font-size:12px;color:#1a1a1a;font-weight:normal;">0</div>
<div class="t" style="left:28.3px;top:552px;font-size:12px;color:#1a1a1a;font-weight:normal;letter-spacing:0.019px;">Rechts- &amp; Steuerberatung, Buchführung</div>
<div class="t" style="left:75px;width:400px;text-align:right;top:552px;font-size:12px;color:#1a1a1a;font-weight:normal;">400</div>
<div class="t" style="left:112px;width:400px;text-align:right;top:552px;font-size:12px;color:#1a1a1a;font-weight:normal;">1%</div>
<div class="t" style="left:260.5px;width:400px;text-align:right;top:552px;font-size:12px;color:#1a1a1a;font-weight:normal;">400</div>
<div class="t" style="left:333px;width:400px;text-align:right;top:552px;font-size:12px;color:#1a1a1a;font-weight:normal;">0</div>
<div class="t" style="left:384px;width:400px;text-align:right;top:552px;font-size:12px;color:#1a1a1a;font-weight:normal;">0</div>
<div class="t" style="left:435px;width:400px;text-align:right;top:552px;font-size:12px;color:#1a1a1a;font-weight:normal;">0</div>
<div class="t" style="left:486px;width:400px;text-align:right;top:552px;font-size:12px;color:#1a1a1a;font-weight:normal;">0</div>
<div class="t" style="left:537px;width:400px;text-align:right;top:552px;font-size:12px;color:#1a1a1a;font-weight:normal;">0</div>
<div class="t" style="left:588px;width:400px;text-align:right;top:552px;font-size:12px;color:#1a1a1a;font-weight:normal;">0</div>
<div class="t" style="left:639px;width:400px;text-align:right;top:552px;font-size:12px;color:#1a1a1a;font-weight:normal;">0</div>
<div class="t" style="left:690px;width:400px;text-align:right;top:552px;font-size:12px;color:#1a1a1a;font-weight:normal;">0</div>
<div class="t" style="left:741px;width:400px;text-align:right;top:552px;font-size:12px;color:#1a1a1a;font-weight:normal;">0</div>
<div class="t" style="left:792px;width:400px;text-align:right;top:552px;font-size:12px;color:#1a1a1a;font-weight:normal;">0</div>
<div class="t" style="left:843px;width:400px;text-align:right;top:552px;font-size:12px;color:#1a1a1a;font-weight:normal;">0</div>
<div class="t" style="left:28.3px;top:569px;font-size:12px;color:#1a1a1a;font-weight:normal;letter-spacing:0.130px;">Miete / Leasing für bewegliche Wirtschaftsgüter (ohne Kfz)</div>
<div class="t" style="left:75px;width:400px;text-align:right;top:569px;font-size:12px;color:#1a1a1a;font-weight:normal;">50</div>
<div class="t" style="left:112px;width:400px;text-align:right;top:569px;font-size:12px;color:#1a1a1a;font-weight:normal;">0%</div>
<div class="t" style="left:260.5px;width:400px;text-align:right;top:569px;font-size:12px;color:#1a1a1a;font-weight:normal;">50</div>
<div class="t" style="left:333px;width:400px;text-align:right;top:569px;font-size:12px;color:#1a1a1a;font-weight:normal;">0</div>
<div class="t" style="left:384px;width:400px;text-align:right;top:569px;font-size:12px;color:#1a1a1a;font-weight:normal;">0</div>
<div class="t" style="left:435px;width:400px;text-align:right;top:569px;font-size:12px;color:#1a1a1a;font-weight:normal;">0</div>
<div class="t" style="left:486px;width:400px;text-align:right;top:569px;font-size:12px;color:#1a1a1a;font-weight:normal;">0</div>
<div class="t" style="left:537px;width:400px;text-align:right;top:569px;font-size:12px;color:#1a1a1a;font-weight:normal;">0</div>
<div class="t" style="left:588px;width:400px;text-align:right;top:569px;font-size:12px;color:#1a1a1a;font-weight:normal;">0</div>
<div class="t" style="left:639px;width:400px;text-align:right;top:569px;font-size:12px;color:#1a1a1a;font-weight:normal;">0</div>
<div class="t" style="left:690px;width:400px;text-align:right;top:569px;font-size:12px;color:#1a1a1a;font-weight:normal;">0</div>
<div class="t" style="left:741px;width:400px;text-align:right;top:569px;font-size:12px;color:#1a1a1a;font-weight:normal;">0</div>
<div class="t" style="left:792px;width:400px;text-align:right;top:569px;font-size:12px;color:#1a1a1a;font-weight:normal;">0</div>
<div class="t" style="left:843px;width:400px;text-align:right;top:569px;font-size:12px;color:#1a1a1a;font-weight:normal;">0</div>
<div class="t" style="left:28.3px;top:586px;font-size:12px;color:#1a1a1a;font-weight:normal;letter-spacing:-0.092px;">Beiträge, Gebühren, Abgaben, Versich. (ohne Gebäude und Kfz)</div>
<div class="t" style="left:75px;width:400px;text-align:right;top:586px;font-size:12px;color:#1a1a1a;font-weight:normal;">300</div>
<div class="t" style="left:112px;width:400px;text-align:right;top:586px;font-size:12px;color:#1a1a1a;font-weight:normal;">1%</div>
<div class="t" style="left:260.5px;width:400px;text-align:right;top:586px;font-size:12px;color:#1a1a1a;font-weight:normal;">300</div>
<div class="t" style="left:333px;width:400px;text-align:right;top:586px;font-size:12px;color:#1a1a1a;font-weight:normal;">0</div>
<div class="t" style="left:384px;width:400px;text-align:right;top:586px;font-size:12px;color:#1a1a1a;font-weight:normal;">0</div>
<div class="t" style="left:435px;width:400px;text-align:right;top:586px;font-size:12px;color:#1a1a1a;font-weight:normal;">0</div>
<div class="t" style="left:486px;width:400px;text-align:right;top:586px;font-size:12px;color:#1a1a1a;font-weight:normal;">0</div>
<div class="t" style="left:537px;width:400px;text-align:right;top:586px;font-size:12px;color:#1a1a1a;font-weight:normal;">0</div>
<div class="t" style="left:588px;width:400px;text-align:right;top:586px;font-size:12px;color:#1a1a1a;font-weight:normal;">0</div>
<div class="t" style="left:639px;width:400px;text-align:right;top:586px;font-size:12px;color:#1a1a1a;font-weight:normal;">0</div>
<div class="t" style="left:690px;width:400px;text-align:right;top:586px;font-size:12px;color:#1a1a1a;font-weight:normal;">0</div>
<div class="t" style="left:741px;width:400px;text-align:right;top:586px;font-size:12px;color:#1a1a1a;font-weight:normal;">0</div>
<div class="t" style="left:792px;width:400px;text-align:right;top:586px;font-size:12px;color:#1a1a1a;font-weight:normal;">0</div>
<div class="t" style="left:843px;width:400px;text-align:right;top:586px;font-size:12px;color:#1a1a1a;font-weight:normal;">0</div>
<div class="t" style="left:28.3px;top:603px;font-size:12px;color:#1a1a1a;font-weight:normal;letter-spacing:0.120px;">Werbekosten</div>
<div class="t" style="left:75px;width:400px;text-align:right;top:603px;font-size:12px;color:#1a1a1a;font-weight:normal;">300</div>
<div class="t" style="left:112px;width:400px;text-align:right;top:603px;font-size:12px;color:#1a1a1a;font-weight:normal;">1%</div>
<div class="t" style="left:260.5px;width:400px;text-align:right;top:603px;font-size:12px;color:#1a1a1a;font-weight:normal;">300</div>
<div class="t" style="left:333px;width:400px;text-align:right;top:603px;font-size:12px;color:#1a1a1a;font-weight:normal;">0</div>
<div class="t" style="left:384px;width:400px;text-align:right;top:603px;font-size:12px;color:#1a1a1a;font-weight:normal;">0</div>
<div class="t" style="left:435px;width:400px;text-align:right;top:603px;font-size:12px;color:#1a1a1a;font-weight:normal;">0</div>
<div class="t" style="left:486px;width:400px;text-align:right;top:603px;font-size:12px;color:#1a1a1a;font-weight:normal;">0</div>
<div class="t" style="left:537px;width:400px;text-align:right;top:603px;font-size:12px;color:#1a1a1a;font-weight:normal;">0</div>
<div class="t" style="left:588px;width:400px;text-align:right;top:603px;font-size:12px;color:#1a1a1a;font-weight:normal;">0</div>
<div class="t" style="left:639px;width:400px;text-align:right;top:603px;font-size:12px;color:#1a1a1a;font-weight:normal;">0</div>
<div class="t" style="left:690px;width:400px;text-align:right;top:603px;font-size:12px;color:#1a1a1a;font-weight:normal;">0</div>
<div class="t" style="left:741px;width:400px;text-align:right;top:603px;font-size:12px;color:#1a1a1a;font-weight:normal;">0</div>
<div class="t" style="left:792px;width:400px;text-align:right;top:603px;font-size:12px;color:#1a1a1a;font-weight:normal;">0</div>
<div class="t" style="left:843px;width:400px;text-align:right;top:603px;font-size:12px;color:#1a1a1a;font-weight:normal;">0</div>
<div class="t" style="left:28.3px;top:620px;font-size:12px;color:#1a1a1a;font-weight:normal;letter-spacing:0.027px;">Schuldzinsen</div>
<div class="t" style="left:75px;width:400px;text-align:right;top:620px;font-size:12px;color:#1a1a1a;font-weight:normal;">0</div>
<div class="t" style="left:112px;width:400px;text-align:right;top:620px;font-size:12px;color:#1a1a1a;font-weight:normal;">0%</div>
<div class="t" style="left:260.5px;width:400px;text-align:right;top:620px;font-size:12px;color:#1a1a1a;font-weight:normal;">0</div>
<div class="t" style="left:333px;width:400px;text-align:right;top:620px;font-size:12px;color:#1a1a1a;font-weight:normal;">0</div>
<div class="t" style="left:384px;width:400px;text-align:right;top:620px;font-size:12px;color:#1a1a1a;font-weight:normal;">0</div>
<div class="t" style="left:435px;width:400px;text-align:right;top:620px;font-size:12px;color:#1a1a1a;font-weight:normal;">0</div>
<div class="t" style="left:486px;width:400px;text-align:right;top:620px;font-size:12px;color:#1a1a1a;font-weight:normal;">0</div>
<div class="t" style="left:537px;width:400px;text-align:right;top:620px;font-size:12px;color:#1a1a1a;font-weight:normal;">0</div>
<div class="t" style="left:588px;width:400px;text-align:right;top:620px;font-size:12px;color:#1a1a1a;font-weight:normal;">0</div>
<div class="t" style="left:639px;width:400px;text-align:right;top:620px;font-size:12px;color:#1a1a1a;font-weight:normal;">0</div>
<div class="t" style="left:690px;width:400px;text-align:right;top:620px;font-size:12px;color:#1a1a1a;font-weight:normal;">0</div>
<div class="t" style="left:741px;width:400px;text-align:right;top:620px;font-size:12px;color:#1a1a1a;font-weight:normal;">0</div>
<div class="t" style="left:792px;width:400px;text-align:right;top:620px;font-size:12px;color:#1a1a1a;font-weight:normal;">0</div>
<div class="t" style="left:843px;width:400px;text-align:right;top:620px;font-size:12px;color:#1a1a1a;font-weight:normal;">0</div>
<div class="t" style="left:28.3px;top:637px;font-size:12px;color:#1a1a1a;font-weight:normal;letter-spacing:0.100px;">übrige Betriebsausgaben</div>
<div class="t" style="left:75px;width:400px;text-align:right;top:637px;font-size:12px;color:#1a1a1a;font-weight:normal;">32</div>
<div class="t" style="left:112px;width:400px;text-align:right;top:637px;font-size:12px;color:#1a1a1a;font-weight:normal;">0%</div>
<div class="t" style="left:260.5px;width:400px;text-align:right;top:637px;font-size:12px;color:#1a1a1a;font-weight:normal;">32</div>
<div class="t" style="left:333px;width:400px;text-align:right;top:637px;font-size:12px;color:#1a1a1a;font-weight:normal;">0</div>
<div class="t" style="left:384px;width:400px;text-align:right;top:637px;font-size:12px;color:#1a1a1a;font-weight:normal;">0</div>
<div class="t" style="left:435px;width:400px;text-align:right;top:637px;font-size:12px;color:#1a1a1a;font-weight:normal;">0</div>
<div class="t" style="left:486px;width:400px;text-align:right;top:637px;font-size:12px;color:#1a1a1a;font-weight:normal;">0</div>
<div class="t" style="left:537px;width:400px;text-align:right;top:637px;font-size:12px;color:#1a1a1a;font-weight:normal;">0</div>
<div class="t" style="left:588px;width:400px;text-align:right;top:637px;font-size:12px;color:#1a1a1a;font-weight:normal;">0</div>
<div class="t" style="left:639px;width:400px;text-align:right;top:637px;font-size:12px;color:#1a1a1a;font-weight:normal;">30</div>
<div class="t" style="left:690px;width:400px;text-align:right;top:637px;font-size:12px;color:#1a1a1a;font-weight:normal;">0</div>
<div class="t" style="left:741px;width:400px;text-align:right;top:637px;font-size:12px;color:#1a1a1a;font-weight:normal;">0</div>
<div class="t" style="left:792px;width:400px;text-align:right;top:637px;font-size:12px;color:#1a1a1a;font-weight:normal;">0</div>
<div class="t" style="left:843px;width:400px;text-align:right;top:637px;font-size:12px;color:#1a1a1a;font-weight:normal;">0</div>
<div class="t" style="left:28.3px;top:654px;font-size:12px;color:#1a1a1a;font-weight:normal;letter-spacing:-0.450px;">Geschenke</div>
<div class="t" style="left:75px;width:400px;text-align:right;top:654px;font-size:12px;color:#1a1a1a;font-weight:normal;">0</div>
<div class="t" style="left:112px;width:400px;text-align:right;top:654px;font-size:12px;color:#1a1a1a;font-weight:normal;">0%</div>
<div class="t" style="left:260.5px;width:400px;text-align:right;top:654px;font-size:12px;color:#1a1a1a;font-weight:normal;">0</div>
<div class="t" style="left:333px;width:400px;text-align:right;top:654px;font-size:12px;color:#1a1a1a;font-weight:normal;">0</div>
<div class="t" style="left:384px;width:400px;text-align:right;top:654px;font-size:12px;color:#1a1a1a;font-weight:normal;">0</div>
<div class="t" style="left:435px;width:400px;text-align:right;top:654px;font-size:12px;color:#1a1a1a;font-weight:normal;">0</div>
<div class="t" style="left:486px;width:400px;text-align:right;top:654px;font-size:12px;color:#1a1a1a;font-weight:normal;">0</div>
<div class="t" style="left:537px;width:400px;text-align:right;top:654px;font-size:12px;color:#1a1a1a;font-weight:normal;">0</div>
<div class="t" style="left:588px;width:400px;text-align:right;top:654px;font-size:12px;color:#1a1a1a;font-weight:normal;">0</div>
<div class="t" style="left:639px;width:400px;text-align:right;top:654px;font-size:12px;color:#1a1a1a;font-weight:normal;">0</div>
<div class="t" style="left:690px;width:400px;text-align:right;top:654px;font-size:12px;color:#1a1a1a;font-weight:normal;">0</div>
<div class="t" style="left:741px;width:400px;text-align:right;top:654px;font-size:12px;color:#1a1a1a;font-weight:normal;">0</div>
<div class="t" style="left:792px;width:400px;text-align:right;top:654px;font-size:12px;color:#1a1a1a;font-weight:normal;">0</div>
<div class="t" style="left:843px;width:400px;text-align:right;top:654px;font-size:12px;color:#1a1a1a;font-weight:normal;">0</div>
<div class="a" style="left:606px;top:276px;width:2px;height:395px;background:#217346;"></div>
<div class="a" style="left:663px;top:276px;width:2px;height:395px;background:#217346;"></div>
<div class="a" style="left:606px;top:276px;width:59px;height:2px;background:#217346;"></div>
<div class="a" style="left:608px;top:278px;width:1px;height:393px;background:#ffffff;"></div>
<div class="a" style="left:0px;top:207px;width:1257px;height:19px;background:#e6e6e6;"></div>
<div class="a" style="left:0px;top:226px;width:25px;height:445px;background:#e6e6e6;"></div>
<div class="a" style="left:0px;top:226px;width:1257px;height:1px;background:#bcbcbc;"></div>
<div class="a" style="left:25px;top:207px;width:1px;height:464px;background:#bcbcbc;"></div>
<div class="a" style="left:378px;top:209px;width:1px;height:16px;background:#cfcfcf;"></div>
<div class="a" style="left:477px;top:209px;width:1px;height:16px;background:#cfcfcf;"></div>
<div class="a" style="left:514px;top:209px;width:1px;height:16px;background:#cfcfcf;"></div>
<div class="a" style="left:535px;top:209px;width:1px;height:16px;background:#cfcfcf;"></div>
<div class="a" style="left:586px;top:209px;width:1px;height:16px;background:#cfcfcf;"></div>
<div class="a" style="left:607px;top:209px;width:1px;height:16px;background:#cfcfcf;"></div>
<div class="a" style="left:663px;top:209px;width:1px;height:16px;background:#cfcfcf;"></div>
<div class="a" style="left:684px;top:209px;width:1px;height:16px;background:#cfcfcf;"></div>
<div class="a" style="left:735px;top:209px;width:1px;height:16px;background:#cfcfcf;"></div>
<div class="a" style="left:786px;top:209px;width:1px;height:16px;background:#cfcfcf;"></div>
<div class="a" style="left:837px;top:209px;width:1px;height:16px;background:#cfcfcf;"></div>
<div class="a" style="left:888px;top:209px;width:1px;height:16px;background:#cfcfcf;"></div>
<div class="a" style="left:939px;top:209px;width:1px;height:16px;background:#cfcfcf;"></div>
<div class="a" style="left:990px;top:209px;width:1px;height:16px;background:#cfcfcf;"></div>
<div class="a" style="left:1041px;top:209px;width:1px;height:16px;background:#cfcfcf;"></div>
<div class="a" style="left:1092px;top:209px;width:1px;height:16px;background:#cfcfcf;"></div>
<div class="a" style="left:1143px;top:209px;width:1px;height:16px;background:#cfcfcf;"></div>
<div class="a" style="left:1194px;top:209px;width:1px;height:16px;background:#cfcfcf;"></div>
<div class="a" style="left:1245px;top:209px;width:1px;height:16px;background:#cfcfcf;"></div>
<div class="a" style="left:608px;top:207px;width:55px;height:18px;background:#d5d5d5;"></div>
<div class="a" style="left:607px;top:225px;width:57px;height:2px;background:#217346;"></div>
<div class="a" style="left:685px;top:207px;width:50px;height:18px;background:#9fd4b0;"></div>
<div class="t" style="left:-98.0px;width:600px;text-align:center;top:209px;font-size:12px;color:#333;font-weight:normal;">A</div>
<div class="t" style="left:128.0px;width:600px;text-align:center;top:209px;font-size:12px;color:#333;font-weight:normal;">B</div>
<div class="t" style="left:196.0px;width:600px;text-align:center;top:209px;font-size:12px;color:#333;font-weight:normal;">C</div>
<div class="t" style="left:225.0px;width:600px;text-align:center;top:209px;font-size:12px;color:#333;font-weight:normal;">D</div>
<div class="t" style="left:261.0px;width:600px;text-align:center;top:209px;font-size:12px;color:#333;font-weight:normal;">E</div>
<div class="t" style="left:297.0px;width:600px;text-align:center;top:209px;font-size:12px;color:#333;font-weight:normal;">F</div>
<div class="t" style="left:335.5px;width:600px;text-align:center;top:209px;font-size:12px;color:#3b5b48;font-weight:normal;">G</div>
<div class="t" style="left:374.0px;width:600px;text-align:center;top:209px;font-size:12px;color:#333;font-weight:normal;">H</div>
<div class="t" style="left:410.0px;width:600px;text-align:center;top:209px;font-size:12px;color:#333;font-weight:normal;">I</div>
<div class="t" style="left:461.0px;width:600px;text-align:center;top:209px;font-size:12px;color:#333;font-weight:normal;">J</div>
<div class="t" style="left:512.0px;width:600px;text-align:center;top:209px;font-size:12px;color:#333;font-weight:normal;">K</div>
<div class="t" style="left:563.0px;width:600px;text-align:center;top:209px;font-size:12px;color:#333;font-weight:normal;">L</div>
<div class="t" style="left:614.0px;width:600px;text-align:center;top:209px;font-size:12px;color:#333;font-weight:normal;">M</div>
<div class="t" style="left:665.0px;width:600px;text-align:center;top:209px;font-size:12px;color:#333;font-weight:normal;">N</div>
<div class="t" style="left:716.0px;width:600px;text-align:center;top:209px;font-size:12px;color:#333;font-weight:normal;">O</div>
<div class="t" style="left:767.0px;width:600px;text-align:center;top:209px;font-size:12px;color:#333;font-weight:normal;">P</div>
<div class="t" style="left:818.0px;width:600px;text-align:center;top:209px;font-size:12px;color:#333;font-weight:normal;">Q</div>
<div class="t" style="left:869.0px;width:600px;text-align:center;top:209px;font-size:12px;color:#333;font-weight:normal;">R</div>
<div class="t" style="left:920.0px;width:600px;text-align:center;top:209px;font-size:12px;color:#333;font-weight:normal;">S</div>
<div class="t" style="left:971.0px;width:600px;text-align:center;top:209px;font-size:12px;color:#333;font-weight:normal;">T</div>
<svg class="a" style="left:8px;top:211px;" width="15" height="14" viewBox="0 0 15 14"><path d="M14 0V13H1z" fill="#b7b7b7"/></svg>
<div class="a" style="left:0px;top:243px;width:25px;height:1px;background:#cdcdcd;"></div>
<div class="t" style="left:-287px;width:600px;text-align:center;top:228px;font-size:12px;color:#333;font-weight:normal;">1</div>
<div class="a" style="left:0px;top:260px;width:25px;height:1px;background:#cdcdcd;"></div>
<div class="t" style="left:-287px;width:600px;text-align:center;top:245px;font-size:12px;color:#333;font-weight:normal;">2</div>
<div class="a" style="left:0px;top:277px;width:25px;height:1px;background:#cdcdcd;"></div>
<div class="t" style="left:-287px;width:600px;text-align:center;top:262px;font-size:12px;color:#333;font-weight:normal;">3</div>
<div class="a" style="left:0px;top:278px;width:25px;height:16px;background:#d5d5d5;"></div>
<div class="a" style="left:0px;top:294px;width:25px;height:1px;background:#cdcdcd;"></div>
<div class="t" style="left:-287px;width:600px;text-align:center;top:279px;font-size:12px;color:#3a4a40;font-weight:normal;">4</div>
<div class="a" style="left:0px;top:295px;width:25px;height:16px;background:#d5d5d5;"></div>
<div class="a" style="left:0px;top:311px;width:25px;height:1px;background:#cdcdcd;"></div>
<div class="t" style="left:-287px;width:600px;text-align:center;top:296px;font-size:12px;color:#3a4a40;font-weight:normal;">5</div>
<div class="a" style="left:0px;top:312px;width:25px;height:16px;background:#d5d5d5;"></div>
<div class="a" style="left:0px;top:328px;width:25px;height:1px;background:#cdcdcd;"></div>
<div class="t" style="left:-287px;width:600px;text-align:center;top:313px;font-size:12px;color:#3a4a40;font-weight:normal;">6</div>
<div class="a" style="left:0px;top:329px;width:25px;height:16px;background:#d5d5d5;"></div>
<div class="a" style="left:0px;top:345px;width:25px;height:1px;background:#cdcdcd;"></div>
<div class="t" style="left:-287px;width:600px;text-align:center;top:330px;font-size:12px;color:#3a4a40;font-weight:normal;">7</div>
<div class="a" style="left:0px;top:346px;width:25px;height:16px;background:#d5d5d5;"></div>
<div class="a" style="left:0px;top:362px;width:25px;height:1px;background:#cdcdcd;"></div>
<div class="t" style="left:-287px;width:600px;text-align:center;top:347px;font-size:12px;color:#3a4a40;font-weight:normal;">14</div>
<div class="a" style="left:0px;top:363px;width:25px;height:16px;background:#d5d5d5;"></div>
<div class="a" style="left:0px;top:379px;width:25px;height:1px;background:#cdcdcd;"></div>
<div class="t" style="left:-287px;width:600px;text-align:center;top:364px;font-size:12px;color:#3a4a40;font-weight:normal;">15</div>
<div class="a" style="left:0px;top:380px;width:25px;height:16px;background:#d5d5d5;"></div>
<div class="a" style="left:0px;top:396px;width:25px;height:1px;background:#cdcdcd;"></div>
<div class="t" style="left:-287px;width:600px;text-align:center;top:381px;font-size:12px;color:#3a4a40;font-weight:normal;">16</div>
<div class="a" style="left:0px;top:397px;width:25px;height:16px;background:#d5d5d5;"></div>
<div class="a" style="left:0px;top:413px;width:25px;height:1px;background:#cdcdcd;"></div>
<div class="t" style="left:-287px;width:600px;text-align:center;top:398px;font-size:12px;color:#3a4a40;font-weight:normal;">17</div>
<div class="a" style="left:0px;top:414px;width:25px;height:16px;background:#d5d5d5;"></div>
<div class="a" style="left:0px;top:430px;width:25px;height:1px;background:#cdcdcd;"></div>
<div class="t" style="left:-287px;width:600px;text-align:center;top:415px;font-size:12px;color:#3a4a40;font-weight:normal;">18</div>
<div class="a" style="left:0px;top:431px;width:25px;height:16px;background:#d5d5d5;"></div>
<div class="a" style="left:0px;top:447px;width:25px;height:1px;background:#cdcdcd;"></div>
<div class="t" style="left:-287px;width:600px;text-align:center;top:432px;font-size:12px;color:#3a4a40;font-weight:normal;">19</div>
<div class="a" style="left:0px;top:448px;width:25px;height:16px;background:#d5d5d5;"></div>
<div class="a" style="left:0px;top:464px;width:25px;height:1px;background:#cdcdcd;"></div>
<div class="t" style="left:-287px;width:600px;text-align:center;top:449px;font-size:12px;color:#3a4a40;font-weight:normal;">20</div>
<div class="a" style="left:0px;top:465px;width:25px;height:16px;background:#d5d5d5;"></div>
<div class="a" style="left:0px;top:481px;width:25px;height:1px;background:#cdcdcd;"></div>
<div class="t" style="left:-287px;width:600px;text-align:center;top:466px;font-size:12px;color:#3a4a40;font-weight:normal;">21</div>
<div class="a" style="left:0px;top:482px;width:25px;height:16px;background:#d5d5d5;"></div>
<div class="a" style="left:0px;top:498px;width:25px;height:1px;background:#cdcdcd;"></div>
<div class="t" style="left:-287px;width:600px;text-align:center;top:483px;font-size:12px;color:#3a4a40;font-weight:normal;">22</div>
<div class="a" style="left:0px;top:499px;width:25px;height:16px;background:#d5d5d5;"></div>
<div class="a" style="left:0px;top:515px;width:25px;height:1px;background:#cdcdcd;"></div>
<div class="t" style="left:-287px;width:600px;text-align:center;top:500px;font-size:12px;color:#3a4a40;font-weight:normal;">23</div>
<div class="a" style="left:0px;top:516px;width:25px;height:16px;background:#d5d5d5;"></div>
<div class="a" style="left:0px;top:532px;width:25px;height:1px;background:#cdcdcd;"></div>
<div class="t" style="left:-287px;width:600px;text-align:center;top:517px;font-size:12px;color:#3a4a40;font-weight:normal;">24</div>
<div class="a" style="left:0px;top:533px;width:25px;height:16px;background:#d5d5d5;"></div>
<div class="a" style="left:0px;top:549px;width:25px;height:1px;background:#cdcdcd;"></div>
<div class="t" style="left:-287px;width:600px;text-align:center;top:534px;font-size:12px;color:#3a4a40;font-weight:normal;">25</div>
<div class="a" style="left:0px;top:550px;width:25px;height:16px;background:#d5d5d5;"></div>
<div class="a" style="left:0px;top:566px;width:25px;height:1px;background:#cdcdcd;"></div>
<div class="t" style="left:-287px;width:600px;text-align:center;top:551px;font-size:12px;color:#3a4a40;font-weight:normal;">26</div>
<div class="a" style="left:0px;top:567px;width:25px;height:16px;background:#d5d5d5;"></div>
<div class="a" style="left:0px;top:583px;width:25px;height:1px;background:#cdcdcd;"></div>
<div class="t" style="left:-287px;width:600px;text-align:center;top:568px;font-size:12px;color:#3a4a40;font-weight:normal;">27</div>
<div class="a" style="left:0px;top:584px;width:25px;height:16px;background:#d5d5d5;"></div>
<div class="a" style="left:0px;top:600px;width:25px;height:1px;background:#cdcdcd;"></div>
<div class="t" style="left:-287px;width:600px;text-align:center;top:585px;font-size:12px;color:#3a4a40;font-weight:normal;">28</div>
<div class="a" style="left:0px;top:601px;width:25px;height:16px;background:#d5d5d5;"></div>
<div class="a" style="left:0px;top:617px;width:25px;height:1px;background:#cdcdcd;"></div>
<div class="t" style="left:-287px;width:600px;text-align:center;top:602px;font-size:12px;color:#3a4a40;font-weight:normal;">29</div>
<div class="a" style="left:0px;top:618px;width:25px;height:16px;background:#d5d5d5;"></div>
<div class="a" style="left:0px;top:634px;width:25px;height:1px;background:#cdcdcd;"></div>
<div class="t" style="left:-287px;width:600px;text-align:center;top:619px;font-size:12px;color:#3a4a40;font-weight:normal;">30</div>
<div class="a" style="left:0px;top:635px;width:25px;height:16px;background:#d5d5d5;"></div>
<div class="a" style="left:0px;top:651px;width:25px;height:1px;background:#cdcdcd;"></div>
<div class="t" style="left:-287px;width:600px;text-align:center;top:636px;font-size:12px;color:#3a4a40;font-weight:normal;">31</div>
<div class="a" style="left:0px;top:652px;width:25px;height:16px;background:#d5d5d5;"></div>
<div class="a" style="left:0px;top:668px;width:25px;height:1px;background:#cdcdcd;"></div>
<div class="t" style="left:-287px;width:600px;text-align:center;top:653px;font-size:12px;color:#3a4a40;font-weight:normal;">32</div>
<div class="a" style="left:0px;top:344px;width:25px;height:2px;background:#eeeeee;"></div>
<div class="a" style="left:24px;top:277px;width:2px;height:394px;background:#217346;"></div>
<div class="a" style="left:1257px;top:207px;width:23px;height:464px;background:#e9e9e9;"></div>
<div class="a" style="left:1261px;top:225px;width:15px;height:432px;background:#dcdcdc;"></div>
<div class="a" style="left:1261px;top:225px;width:15px;height:292px;background:#fff;border:1px solid #c8c8c8;box-sizing:border-box;"></div>
<div class="a" style="left:1261px;top:208px;width:15px;height:17px;background:#fff;border:1px solid #c8c8c8;box-sizing:border-box;"></div>
<svg class="a" style="left:1264px;top:213px;" width="9" height="6" viewBox="0 0 9 6"><path d="M0 5L4.5 0L9 5z" fill="#666"/></svg>
<div class="a" style="left:1261px;top:656px;width:15px;height:15px;background:#fff;border:1px solid #c8c8c8;box-sizing:border-box;"></div>
<svg class="a" style="left:1264px;top:661px;" width="9" height="6" viewBox="0 0 9 6"><path d="M0 0L4.5 5L9 0z" fill="#666"/></svg>
<div class="a" style="left:1276px;top:68px;width:4px;height:652px;background:#eeeef0;"></div>
<div class="a" style="left:1276px;top:68px;width:1px;height:652px;background:#d2d2d2;"></div>
<div class="a" style="left:0px;top:671px;width:1280px;height:28px;background:#e8e8e8;"></div>
<div class="a" style="left:0px;top:671px;width:1257px;height:1px;background:#d4d4d4;"></div>
<svg class="a" style="left:24px;top:680px;" width="8" height="9" viewBox="0 0 8 9"><path d="M7.5 0V9L0 4.5z" fill="#1e3d2c"/></svg>
<svg class="a" style="left:56px;top:680px;" width="8" height="9" viewBox="0 0 8 9"><path d="M0.5 0V9L8 4.5z" fill="#c4c4c4"/></svg>
<div class="a" style="left:81px;top:687px;width:2.5px;height:2.5px;background:#333;"></div>
<div class="a" style="left:85px;top:687px;width:2.5px;height:2.5px;background:#333;"></div>
<div class="a" style="left:89px;top:687px;width:2.5px;height:2.5px;background:#333;"></div>
<div class="a" style="left:100px;top:673px;width:1px;height:23px;background:#c8c8c8;"></div>
<div class="a" style="left:102px;top:673px;width:99px;height:23px;background:#ffff00;"></div>
<div class="a" style="left:202px;top:674px;width:1px;height:21px;background:#c0c0c0;"></div>
<div class="t" style="left:-148.5px;width:600px;text-align:center;top:677px;font-size:13.4px;color:#222;font-weight:normal;">Kfz-Nutzung</div>
<div class="a" style="left:204px;top:673px;width:111px;height:23px;background:#ffff00;"></div>
<div class="a" style="left:316px;top:674px;width:1px;height:21px;background:#c0c0c0;"></div>
<div class="t" style="left:-40.5px;width:600px;text-align:center;top:677px;font-size:13.4px;color:#222;font-weight:normal;">Arbeitszimmer</div>
<div class="a" style="left:318px;top:673px;width:67px;height:23px;background:#0070c0;"></div>
<div class="a" style="left:386px;top:674px;width:1px;height:21px;background:#c0c0c0;"></div>
<div class="t" style="left:51.5px;width:600px;text-align:center;top:677px;font-size:13.4px;color:#e8f0f8;font-weight:normal;">pr.Ausg</div>
<div class="a" style="left:389px;top:673px;width:95px;height:23px;background:#92d050;"></div>
<div class="a" style="left:485px;top:674px;width:1px;height:21px;background:#c0c0c0;"></div>
<div class="t" style="left:136.5px;width:600px;text-align:center;top:677px;font-size:13.4px;color:#1f2a1a;font-weight:normal;">USt.Voranm</div>
<div class="a" style="left:487px;top:673px;width:81px;height:23px;background:#92d050;"></div>
<div class="a" style="left:569px;top:674px;width:1px;height:21px;background:#c0c0c0;"></div>
<div class="t" style="left:227.5px;width:600px;text-align:center;top:677px;font-size:13.4px;color:#1f2a1a;font-weight:normal;">USt.Erklär</div>
<div class="a" style="left:626px;top:673px;width:44px;height:23px;background:#92d050;"></div>
<div class="a" style="left:671px;top:674px;width:1px;height:21px;background:#c0c0c0;"></div>
<div class="t" style="left:348.0px;width:600px;text-align:center;top:677px;font-size:13.4px;color:#1f2a1a;font-weight:normal;">EÜR</div>
<div class="a" style="left:569px;top:671px;width:55px;height:26px;background:#ffffff;background:linear-gradient(#ffffff,#f4f8f5);"></div>
<div class="a" style="left:569px;top:695px;width:55px;height:2px;background:#217346;"></div>
<div class="t" style="left:296.5px;width:600px;text-align:center;top:677px;font-size:13px;color:#217346;font-weight:bold;">BWA</div>
<svg class="a" style="left:703px;top:677px;" width="17" height="17" viewBox="0 0 17 17"><circle cx="8.5" cy="8.5" r="7.3" fill="none" stroke="#777" stroke-width="1.3"/><path d="M8.5 4.5v8M4.5 8.5h8" stroke="#555" stroke-width="1.6"/></svg>
<div class="a" style="left:767px;top:681px;width:2px;height:2px;background:#bbb;"></div>
<div class="a" style="left:767px;top:685px;width:2px;height:2px;background:#bbb;"></div>
<div class="a" style="left:767px;top:689px;width:2px;height:2px;background:#bbb;"></div>
<div class="a" style="left:784px;top:678px;width:476px;height:15px;background:#dcdcdc;"></div>
<div class="a" style="left:784px;top:678px;width:16px;height:15px;background:#fff;border:1px solid #c8c8c8;box-sizing:border-box;"></div>
<svg class="a" style="left:789px;top:681px;" width="6" height="9" viewBox="0 0 6 9"><path d="M5 0V9L0 4.5z" fill="#666"/></svg>
<div class="a" style="left:800px;top:678px;width:166px;height:15px;background:#fff;border:1px solid #c8c8c8;box-sizing:border-box;"></div>
<div class="a" style="left:1245px;top:678px;width:16px;height:15px;background:#fff;border:1px solid #c8c8c8;box-sizing:border-box;"></div>
<svg class="a" style="left:1250px;top:681px;" width="6" height="9" viewBox="0 0 6 9"><path d="M0 0V9L5 4.5z" fill="#666"/></svg>
<div class="a" style="left:0px;top:698px;width:1280px;height:22px;background:#f0f0f0;"></div>
<div class="a" style="left:0px;top:698px;width:1280px;height:1px;background:#d0d0d0;"></div>
<div class="t" style="left:8px;top:701px;font-size:11.6px;color:#444;font-weight:normal;">Bereit</div>
<div class="t" style="left:702px;top:701px;font-size:11.6px;color:#444;font-weight:normal;">Mittelwert: 5.001</div>
<div class="t" style="left:804px;top:701px;font-size:11.6px;color:#444;font-weight:normal;">Anzahl: 31</div>
<div class="t" style="left:873px;top:701px;font-size:11.6px;color:#444;font-weight:normal;">Summe: 155.032</div>
<div class="a" style="left:974px;top:699px;width:36px;height:21px;background:#d0d0d0;"></div>
<svg class="a" style="left:983px;top:702px;" width="16" height="15" viewBox="0 0 16 15"><rect x="1.5" y="1.5" width="13" height="12" fill="none" stroke="#555"/><path d="M1.5 5.5h13M1.5 9.5h13M5.8 1.5v12M10.2 1.5v12" stroke="#555"/></svg>
<svg class="a" style="left:1022px;top:702px;" width="16" height="15" viewBox="0 0 16 15"><rect x="1.5" y="1.5" width="13" height="12" fill="none" stroke="#555"/><rect x="4.5" y="4" width="7" height="7" fill="none" stroke="#555"/><path d="M6 6h4M6 8h4" stroke="#555"/></svg>
<svg class="a" style="left:1060px;top:702px;" width="16" height="15" viewBox="0 0 16 15"><rect x="1.5" y="1.5" width="13" height="12" fill="none" stroke="#555"/><path d="M5.5 1.5v5h5v-5" fill="none" stroke="#555"/></svg>
<div class="a" style="left:1090px;top:709px;width:8px;height:2px;background:#555;"></div>
<div class="a" style="left:1103px;top:709px;width:100px;height:1px;background:#b0b0b0;"></div>
<div class="a" style="left:1150px;top:702px;width:4px;height:14px;background:#555;"></div>
<div class="a" style="left:1205px;top:709px;width:10px;height:2px;background:#555;"></div>
<div class="a" style="left:1209px;top:705px;width:2px;height:10px;background:#555;"></div>
<div class="t" style="left:1229px;top:701px;font-size:11.6px;color:#444;font-weight:normal;">100 %</div>
<div class="a" style="left:666px;top:189px;width:75px;height:75px;border-radius:50%;box-sizing:border-box;border:4px solid rgba(226,234,40,0.88);"></div>
<svg class="a" style="left:695px;top:219px;" width="18" height="18" viewBox="0 0 18 18"><path d="M6 1.5h5v4.5h4.5v5H11v4.5H6V11H1.5V6H6z" fill="#fff" stroke="#000" stroke-width="2"/></svg>
</body></html>
